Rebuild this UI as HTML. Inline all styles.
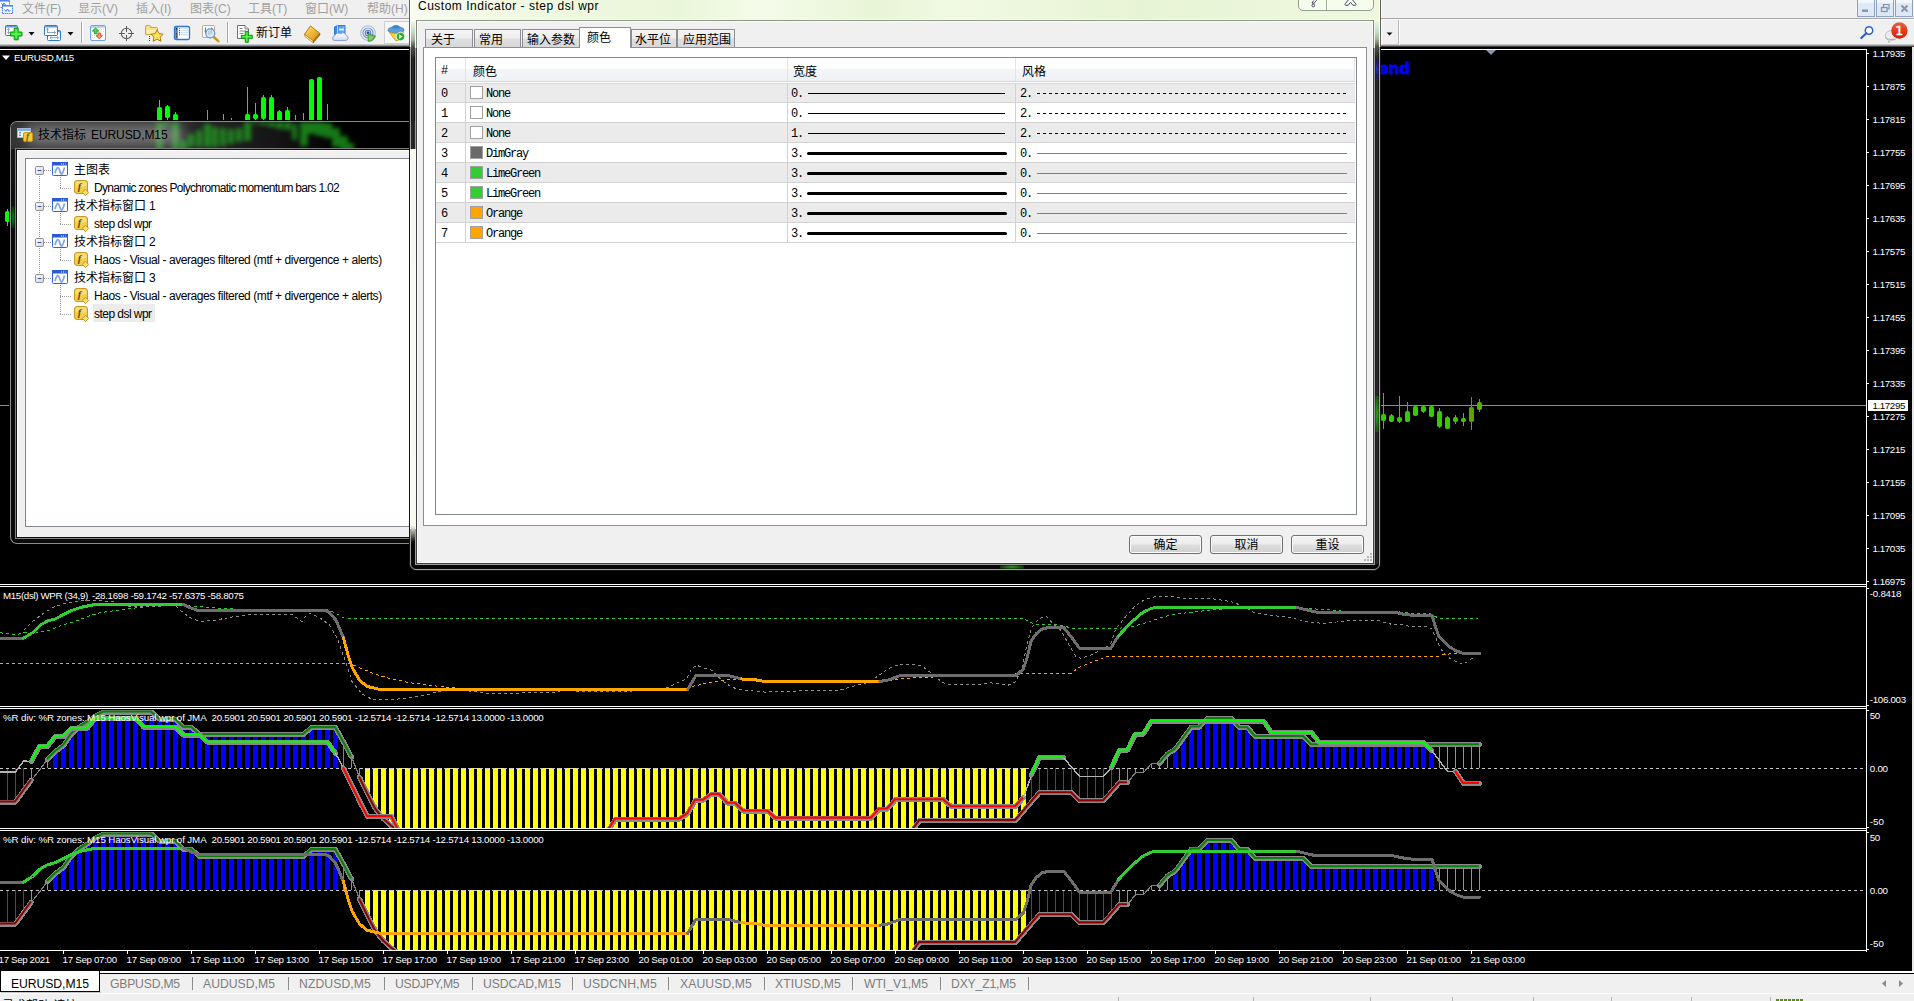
<!DOCTYPE html>
<html lang="zh"><head><meta charset="utf-8"><title>MetaTrader - EURUSD,M15</title>
<style>
*{box-sizing:border-box;margin:0;padding:0}
html,body{width:1914px;height:1001px;overflow:hidden;background:#f0f0f0}
body{position:relative;font-family:"Liberation Sans","Noto Sans CJK SC",sans-serif;font-size:12px;color:#000}
.a{position:absolute}
.t{position:absolute;white-space:nowrap;line-height:1}
.ct{position:absolute;white-space:nowrap;line-height:1;color:#fff;font-size:10.5px;letter-spacing:-0.2px}
.cj{font-family:"Liberation Sans","Noto Sans CJK SC",sans-serif}
svg{position:absolute;left:0;top:0;overflow:visible}
</style></head><body>

<div class="a" style="left:0px;top:0px;width:1914px;height:19px;background:#f0f0f0"></div>
<div class="a" style="left:0px;top:18px;width:1914px;height:1px;background:#a5a5a5"></div>
<div class="a" style="left:0px;top:19px;width:1914px;height:28px;background:#f0f0f0"></div>
<div class="a" style="left:0px;top:19px;width:1914px;height:1px;background:#fafafa"></div>
<div class="a" style="left:0px;top:44px;width:1914px;height:3px;background:linear-gradient(#e2e2e2,#8a8a8a 55%,#1a1a1a)"></div>
<svg width="16" height="18" viewBox="0 0 16 18"><rect x="-0.500" y="0.500" width="10" height="7" fill="#fff" stroke="#4a86e8" stroke-dasharray="1.500 .5"/><rect x="0" y="0" width="9.500" height="1.600" fill="#4a86e8"/><path d="M1.500 3.500l1.500 1.500 1-2 1.500 2" stroke="#3a6fd0" fill="none" stroke-width="1"/>
<rect x="2.500" y="5.500" width="10" height="8" fill="#fff" stroke="#4a86e8" stroke-dasharray="1.500 .5"/><rect x="2" y="5" width="11" height="1.600" fill="#4a86e8"/><path d="M4.500 9.500l1.500 2 1.500-2.500 1.500 2.500 1.500-1.500" stroke="#3a6fd0" fill="none" stroke-width="1"/></svg>
<div class="t" style="left:22px;top:2px;font-size:12px;color:#a0a0a0;line-height:15px">文件(F)</div>
<div class="t" style="left:78px;top:2px;font-size:12px;color:#a0a0a0;line-height:15px">显示(V)</div>
<div class="t" style="left:136px;top:2px;font-size:12px;color:#a0a0a0;line-height:15px">插入(I)</div>
<div class="t" style="left:190px;top:2px;font-size:12px;color:#a0a0a0;line-height:15px">图表(C)</div>
<div class="t" style="left:248px;top:2px;font-size:12px;color:#a0a0a0;line-height:15px">工具(T)</div>
<div class="t" style="left:305px;top:2px;font-size:12px;color:#a0a0a0;line-height:15px">窗口(W)</div>
<div class="t" style="left:367px;top:2px;font-size:12px;color:#a0a0a0;line-height:15px">帮助(H)</div>
<div class="a" style="left:1857px;top:-1px;width:18px;height:18px;background:linear-gradient(#f3f8fd,#eef5fc 18%,#dfeaf7 22%,#dce8f6);border:1px solid #8ea3c2"></div>
<div class="a" style="left:1876px;top:-1px;width:18px;height:18px;background:linear-gradient(#f3f8fd,#eef5fc 18%,#dfeaf7 22%,#dce8f6);border:1px solid #8ea3c2"></div>
<div class="a" style="left:1895px;top:-1px;width:18px;height:18px;background:linear-gradient(#f3f8fd,#eef5fc 18%,#dfeaf7 22%,#dce8f6);border:1px solid #8ea3c2"></div>
<svg width="1914" height="20" viewBox="0 0 1914 20">
<rect x="1862" y="9.500" width="6" height="2.400" fill="#8893a3"/>
<path d="M1883.500 7v-2.500h5.500v4.500h-1.800" fill="none" stroke="#8893a3" stroke-width="1.200"/><rect x="1881.500" y="7.500" width="5.500" height="4" fill="none" stroke="#8893a3" stroke-width="1.300"/>
<path d="M1901.500 5.500l6 6M1907.500 5.500l-6 6" stroke="#8893a3" stroke-width="1.900"/>
</svg>
<svg width="1914" height="48" viewBox="0 0 1914 48">
<!-- new chart -->
<rect x="5.500" y="25.500" width="12" height="10" rx="1" fill="#fdfdfd" stroke="#2f78c6" stroke-width="1"/><rect x="6" y="26" width="11" height="1.500" fill="#5e9fdc"/>
<path d="M8.500 28.500v5M7.300 29.800l1.200-1.300 1.200 1.300M7.300 32.200l1.200 1.300 1.200-1.300" stroke="#7b98b4" fill="none" stroke-width=".9"/>
<path d="M14.200 28.200h4v3.800h3.800v4h-3.800v3.800h-4v-3.800h-3.800v-4h3.800z" fill="#25e225" stroke="#0b990b" stroke-width="1" stroke-linejoin="round"/><path d="M15.200 29.200h2v8.600h-2z M11.400 33h9.600v2h-9.600z" fill="#7dfb7d" opacity=".55"/>
<path d="M28.500 32h6l-3 3.500z" fill="#111"/>
<!-- profiles -->
<rect x="47.500" y="30.500" width="13" height="10" rx="1" fill="#fdfdfd" stroke="#2f78c6"/><rect x="48" y="31" width="12" height="1.300" fill="#5e9fdc"/>
<path d="M50 37.700h8.500M50 37.700l1.500-1.400M50 37.700l1.500 1.400M58.500 37.700l-1.500-1.400M58.500 37.700l-1.500 1.400" stroke="#7b98b4" fill="none" stroke-width=".9"/>
<rect x="44.500" y="25.500" width="13" height="10" rx="1" fill="#fdfdfd" stroke="#2f78c6"/><rect x="45" y="26" width="12" height="1.500" fill="#5e9fdc"/>
<path d="M47.500 28.300v4.500M46.400 29.500l1.100-1.200 1.100 1.200M47 32.500h8.500M55.500 32.500l-1.500-1.400M55.500 32.500l-1.500 1.400" stroke="#7b98b4" fill="none" stroke-width=".9"/>
<path d="M67.500 32h6l-3 3.500z" fill="#111"/>
<rect x="81" y="22" width="1" height="21" fill="#a8a8a8"/><rect x="82" y="22" width="1" height="21" fill="#fff"/>
<!-- market watch -->
<rect x="90.500" y="25.500" width="15" height="15" rx="1.500" fill="#fff" stroke="#6aa5e6"/><rect x="91" y="26" width="14" height="2" fill="#b2d2f6"/>
<path d="M99 29.500h5M99 31.500h5M92 35.500h4M92 37.500h4" stroke="#d8d8d8" stroke-width=".8" stroke-dasharray="1 1"/>
<path d="M94.300 33.800v-2.700h-1.900l3.200-3.100 3.200 3.100h-1.900v2.700z" fill="#57d457" stroke="#1c981c" stroke-width=".9" stroke-linejoin="round"/>
<path d="M98 33v2.700h-1.900l3.200 3.100 3.200-3.100h-1.900v-2.700z" fill="#ff9c74" stroke="#d8431a" stroke-width=".9" stroke-linejoin="round"/>
<!-- crosshair -->
<circle cx="126.500" cy="33.500" r="5.200" fill="none" stroke="#5c5c5c" stroke-width="1.050"/><path d="M126.500 26v15M119 33.500h15" stroke="#5c5c5c" stroke-width="1.050"/>
<circle cx="126.500" cy="33.500" r="1.600" fill="#f0f0f0"/>
<!-- folder star -->
<path d="M145.500 26.800q0-1.300 1.300-1.300h2.700q1.300 0 1.300 1.300v.7h5.700q1 0 1 1v6h-12z" fill="#fbe08a" stroke="#c9a23a"/><path d="M146.500 30h10v4h-10z" fill="#fff6d0" opacity=".6"/>
<path d="M157 29.800l2 3.900 4.200.5-3.100 2.900.9 4.200-4-2.100-3.900 2.100.8-4.200-3-2.900 4.200-.5z" fill="#ffe259" stroke="#a97d12" stroke-width="1"/>
<path d="M149.500 36v5" stroke="#333" stroke-width="1" stroke-dasharray="1 1"/>
<!-- navigator -->
<rect x="174.500" y="26.500" width="15" height="13" rx="1.500" fill="#fff" stroke="#2f74c8" stroke-width="1.300"/><rect x="175.200" y="27.200" width="2.600" height="11.600" fill="#3d7fd2"/><rect x="176" y="33" width="1" height="5" fill="#555"/><circle cx="176.500" cy="28.700" r=".7" fill="#111"/>
<path d="M180.500 28.700h8M180.500 30.700h8M180.500 32.700h8M180.500 34.700h8" stroke="#c4d6f2" stroke-width=".9"/><path d="M179 28.700h1M179 34.700h1" stroke="#f01010" stroke-width="1.100"/><path d="M179 30.700h1M179 32.700h1" stroke="#1a3a1a" stroke-width="1.100"/>
<!-- magnifier chart -->
<rect x="202.500" y="25.500" width="12" height="12" rx=".8" fill="#fafafa" stroke="#b7ae98"/>
<path d="M205.500 27.500v6M211.500 27.500v5M204.500 31h1M211.500 28.500h1" stroke="#667" stroke-width=".9"/>
<circle cx="210.300" cy="33.300" r="4.500" fill="#d3e6f8" fill-opacity=".85" stroke="#5f97dc" stroke-width="1.200"/><path d="M209 31v4M211 30.500v4" stroke="#9ab" stroke-width="1.200" opacity=".7"/>
<path d="M214 37.300l4.300 3.800" stroke="#c7981f" stroke-width="2.600" stroke-linecap="round"/>
<rect x="227" y="22" width="1" height="21" fill="#a8a8a8"/><rect x="228" y="22" width="1" height="21" fill="#fff"/>
<!-- new order -->
<path d="M237.500 25.500h7.500l3.500 3.500v9.500h-11z" fill="#fff" stroke="#6e6e6e"/><path d="M245 25.500v3.500h3.500" fill="#e4e4e4" stroke="#6e6e6e" stroke-width=".8"/><path d="M239.500 28.500h3M239.500 31h6M239.500 33.500h4" stroke="#8a8a8a" stroke-width="1"/>
<path d="M245.300 31.300h3v4h4v3h-4v4h-3v-4h-4v-3h4z" fill="#25e225" stroke="#0b990b" stroke-width="1" stroke-linejoin="round"/><path d="M246.300 32.300h1v9h-1z M242.300 36.300h9v1h-9z" fill="#8dfc8d" opacity=".6"/>
<!-- gold book -->
<defs><linearGradient id="gb" x1="0" y1="0" x2="1" y2="1"><stop offset="0" stop-color="#ffe07a"/><stop offset=".5" stop-color="#f2b632"/><stop offset="1" stop-color="#c48a12"/></linearGradient>
<linearGradient id="cl" x1="0" y1="0" x2="0" y2="1"><stop offset="0" stop-color="#ffffff"/><stop offset="1" stop-color="#c9d9f2"/></linearGradient>
<linearGradient id="sv" x1="0" y1="0" x2="1" y2="0"><stop offset="0" stop-color="#2a86ee"/><stop offset="1" stop-color="#6fb4f8"/></linearGradient></defs>
<path d="M304.500 34.300l6-8.400 9.300 7.400-6.600 7.700z" fill="url(#gb)" stroke="#a87410" stroke-width=".9" stroke-linejoin="round"/>
<path d="M304.500 34.300l.4 2.200 8.500 6.300-.2-2z" fill="#fff1c4" stroke="#a87410" stroke-width=".7" stroke-linejoin="round"/><path d="M313.200 41l6.600-7.700.2 1.700-6.600 7.800z" fill="#b98414" stroke="#8a5e08" stroke-width=".6"/>
<!-- cloud computer -->
<path d="M334.500 27l3-1.500h7.500v9h-10.500z" fill="url(#sv)" stroke="#1f6fd0" stroke-width=".9"/><path d="M337.500 25.500v9" stroke="#cfe6ff" stroke-width=".8"/><rect x="339" y="28.500" width="5" height="2" fill="#dff0ff"/>
<path d="M334.300 40.500h11.500a2.600 2.600 0 0 0 .4-5.100 3.300 3.300 0 0 0-5.600-1.600 3.600 3.600 0 0 0-5.800 2 2.400 2.400 0 0 0-.5 4.700z" fill="url(#cl)" stroke="#8397c4" stroke-width=".9"/>
<!-- signals -->
<circle cx="368" cy="33" r="7.300" fill="none" stroke="#a9bde0" stroke-width="1.100"/><circle cx="368" cy="33" r="5" fill="none" stroke="#7f9ad2" stroke-width="1.200"/><circle cx="368" cy="33" r="2.800" fill="none" stroke="#5a7cc8" stroke-width="1.100"/><circle cx="368" cy="32.800" r="1.500" fill="#1f4fb0"/>
<path d="M368 33.500v8a8 8 0 0 0 7.600-5.600z" fill="#56b04a" stroke="#2c7f24" stroke-width=".5"/><path d="M368.600 35v5.600a6.500 6.500 0 0 0 5.200-3.800z" fill="#a8dca0" opacity=".55"/>
<!-- autotrading pressed -->
<rect x="384.500" y="21.500" width="28" height="22" fill="#f7f7f7" stroke="#cfcfcf"/>
<path d="M388 30a8 3.300 0 0 1 16 0a8 3.300 0 0 1-16 0z" fill="#5aa0dc" stroke="#2f74b8" stroke-width=".8"/><path d="M392 28.500a4 3.500 0 0 1 8 0z" fill="#3f86c8"/>
<path d="M389.500 32.500l6 8h5l3-8a12 4 0 0 1-14 0z" fill="#f4cf4a" stroke="#c39a1c" stroke-width=".8"/>
<circle cx="400.500" cy="36.500" r="4.300" fill="#27b427" stroke="#fff" stroke-width=".8"/><path d="M399 34.300l3.500 2.200-3.500 2.200z" fill="#fff"/>
<!-- right part -->
<path d="M1386.500 32.500h6l-3 3z" fill="#111"/>
<rect x="1398" y="20" width="1" height="25" fill="#b8b8b8"/><rect x="1399" y="20" width="1" height="25" fill="#fff"/>
<circle cx="1869" cy="30.500" r="3.700" fill="#fff" stroke="#2a60c8" stroke-width="1.500"/><path d="M1866.300 33.300l-5 4.700" stroke="#2a60c8" stroke-width="2.200" stroke-linecap="round"/>
<path d="M1885.300 35.500a6.300 4.800 0 1 1 9.500 4.100l-4.300.9-1.700 2.300-.2-2.500a6.300 4.800 0 0 1-3.300-4.800z" fill="#ececf0" stroke="#b9b9bd" stroke-width=".9"/><path d="M1886 37.500a6 3 0 0 0 9 1.500" fill="none" stroke="#9a9aa0" stroke-width=".8"/>
<defs><linearGradient id="bd" x1="0" y1="0" x2="0" y2="1"><stop offset="0" stop-color="#ea6040"/><stop offset=".55" stop-color="#e23a1e"/><stop offset="1" stop-color="#d61c04"/></linearGradient></defs>
<circle cx="1899.400" cy="30.500" r="8.200" fill="url(#bd)"/>
<text x="1899.200" y="35.200" style="font-family:'DejaVu Sans','Liberation Sans',sans-serif" font-size="12.500" fill="#fff" stroke="#fff" stroke-width=".45" text-anchor="middle">1</text>
</svg>
<div class="t" style="left:256px;top:25px;font-size:12px;line-height:16px;color:#000">新订单</div>
<div class="a" style="left:0px;top:47px;width:1912px;height:924px;background:#000"></div>
<div class="a" style="left:1912px;top:47px;width:2px;height:924px;background:#e8e8e8"></div>
<div class="a" style="left:0px;top:971px;width:1914px;height:30px;background:#f0f0f0"></div>
<div class="a" style="left:0px;top:971px;width:1914px;height:2px;background:#fff"></div>
<div class="a" style="left:99px;top:973px;width:1815px;height:1px;background:#000"></div>
<div class="a" style="left:0px;top:971px;width:100px;height:21px;background:#fff;border:1px solid #000;border-top:none"></div>
<div class="a" style="left:1px;top:992px;width:100px;height:1px;background:#c4c4c4"></div>
<div class="t" style="left:11px;top:977px;font-size:12.2px;letter-spacing:-0.064px;line-height:14px;color:#000">EURUSD,M15</div>
<div class="t" style="left:110px;top:977px;font-size:12.2px;letter-spacing:-0.207px;line-height:14px;color:#7d7d7d">GBPUSD,M5</div>
<div class="a" style="left:192px;top:977px;width:1px;height:13px;background:#8c8c8c"></div>
<div class="t" style="left:203px;top:977px;font-size:12.2px;letter-spacing:0.016px;line-height:14px;color:#7d7d7d">AUDUSD,M5</div>
<div class="a" style="left:288px;top:977px;width:1px;height:13px;background:#8c8c8c"></div>
<div class="t" style="left:299px;top:977px;font-size:12.2px;letter-spacing:0.092px;line-height:14px;color:#7d7d7d">NZDUSD,M5</div>
<div class="a" style="left:384px;top:977px;width:1px;height:13px;background:#8c8c8c"></div>
<div class="t" style="left:395px;top:977px;font-size:12.2px;letter-spacing:-0.275px;line-height:14px;color:#7d7d7d">USDJPY,M5</div>
<div class="a" style="left:472px;top:977px;width:1px;height:13px;background:#8c8c8c"></div>
<div class="t" style="left:483px;top:977px;font-size:12.2px;letter-spacing:-0.064px;line-height:14px;color:#7d7d7d">USDCAD,M15</div>
<div class="a" style="left:572px;top:977px;width:1px;height:13px;background:#8c8c8c"></div>
<div class="t" style="left:583px;top:977px;font-size:12.2px;letter-spacing:0.163px;line-height:14px;color:#7d7d7d">USDCNH,M5</div>
<div class="a" style="left:668px;top:977px;width:1px;height:13px;background:#8c8c8c"></div>
<div class="t" style="left:680px;top:977px;font-size:12.2px;letter-spacing:0.091px;line-height:14px;color:#7d7d7d">XAUUSD,M5</div>
<div class="a" style="left:764px;top:977px;width:1px;height:13px;background:#8c8c8c"></div>
<div class="t" style="left:775px;top:977px;font-size:12.2px;letter-spacing:0.103px;line-height:14px;color:#7d7d7d">XTIUSD,M5</div>
<div class="a" style="left:852px;top:977px;width:1px;height:13px;background:#8c8c8c"></div>
<div class="t" style="left:864px;top:977px;font-size:12.2px;letter-spacing:-0.045px;line-height:14px;color:#7d7d7d">WTI_V1,M5</div>
<div class="a" style="left:940px;top:977px;width:1px;height:13px;background:#8c8c8c"></div>
<div class="t" style="left:951px;top:977px;font-size:12.2px;letter-spacing:-0.161px;line-height:14px;color:#7d7d7d">DXY_Z1,M5</div>
<div class="a" style="left:1028px;top:977px;width:1px;height:13px;background:#8c8c8c"></div>
<svg width="1914" height="1001" viewBox="0 0 1914 1001"><path d="M1886 980v7l-4-3.500zM1899 980v7l4-3.500z" fill="#8a8a8a"/></svg>
<div class="a" style="left:0px;top:993px;width:1914px;height:1px;background:#fbfbfb"></div>
<div class="a" style="left:0px;top:994px;width:1914px;height:7px;background:#f0f0f0"></div>
<div class="a" style="left:1118px;top:997px;width:1px;height:4px;background:#b4b4b4"></div>
<div class="a" style="left:1253px;top:997px;width:1px;height:4px;background:#b4b4b4"></div>
<div class="a" style="left:1370px;top:997px;width:1px;height:4px;background:#b4b4b4"></div>
<div class="a" style="left:1452px;top:997px;width:1px;height:4px;background:#b4b4b4"></div>
<div class="a" style="left:1533px;top:997px;width:1px;height:4px;background:#b4b4b4"></div>
<div class="a" style="left:1611px;top:997px;width:1px;height:4px;background:#b4b4b4"></div>
<div class="a" style="left:1691px;top:997px;width:1px;height:4px;background:#b4b4b4"></div>
<div class="a" style="left:1770px;top:997px;width:1px;height:4px;background:#b4b4b4"></div>
<div class="a" style="left:1776px;top:999px;width:3px;height:2px;background:#5c8a14"></div>
<div class="a" style="left:1780px;top:999px;width:3px;height:2px;background:#5c8a14"></div>
<div class="a" style="left:1784px;top:999px;width:3px;height:2px;background:#5c8a14"></div>
<div class="a" style="left:1788px;top:999px;width:3px;height:2px;background:#5c8a14"></div>
<div class="a" style="left:1792px;top:999px;width:3px;height:2px;background:#5c8a14"></div>
<div class="a" style="left:1796px;top:999px;width:3px;height:2px;background:#5c8a14"></div>
<div class="a" style="left:1800px;top:999px;width:3px;height:2px;background:#5c8a14"></div>
<div class="t" style="left:2px;top:999px;font-size:12px;line-height:14px;color:#000">寻求帮助,请按 F1</div>
<div class="t" style="left:1141px;top:999px;font-size:12px;line-height:14px;color:#000">Default</div>
<div class="t" style="left:1846px;top:999px;font-size:12px;line-height:14px;color:#000">31/1 kb</div>
<svg width="1914" height="1001" viewBox="0 0 1914 1001" shape-rendering="crispEdges"><defs><clipPath id="c1"><rect x="0" y="587" width="1866" height="119"/></clipPath><clipPath id="c2"><rect x="0" y="709" width="1866" height="119"/></clipPath><clipPath id="c3"><rect x="0" y="831" width="1866" height="119"/></clipPath></defs><rect x="0" y="49" width="1867" height="1" fill="#fff"/><rect x="1866" y="49" width="1" height="903" fill="#fff"/><rect x="0" y="584" width="1867" height="1" fill="#fff"/><rect x="0" y="586" width="1867" height="1" fill="#fff"/><rect x="0" y="706" width="1867" height="1" fill="#fff"/><rect x="0" y="708" width="1867" height="1" fill="#fff"/><rect x="0" y="828" width="1867" height="1" fill="#fff"/><rect x="0" y="830" width="1867" height="1" fill="#fff"/><rect x="0" y="950" width="1867" height="1" fill="#fff"/><rect x="63" y="951" width="1" height="3" fill="#fff"/><rect x="127" y="951" width="1" height="3" fill="#fff"/><rect x="191" y="951" width="1" height="3" fill="#fff"/><rect x="255" y="951" width="1" height="3" fill="#fff"/><rect x="319" y="951" width="1" height="3" fill="#fff"/><rect x="383" y="951" width="1" height="3" fill="#fff"/><rect x="447" y="951" width="1" height="3" fill="#fff"/><rect x="511" y="951" width="1" height="3" fill="#fff"/><rect x="575" y="951" width="1" height="3" fill="#fff"/><rect x="639" y="951" width="1" height="3" fill="#fff"/><rect x="703" y="951" width="1" height="3" fill="#fff"/><rect x="767" y="951" width="1" height="3" fill="#fff"/><rect x="831" y="951" width="1" height="3" fill="#fff"/><rect x="895" y="951" width="1" height="3" fill="#fff"/><rect x="959" y="951" width="1" height="3" fill="#fff"/><rect x="1023" y="951" width="1" height="3" fill="#fff"/><rect x="1087" y="951" width="1" height="3" fill="#fff"/><rect x="1151" y="951" width="1" height="3" fill="#fff"/><rect x="1215" y="951" width="1" height="3" fill="#fff"/><rect x="1279" y="951" width="1" height="3" fill="#fff"/><rect x="1343" y="951" width="1" height="3" fill="#fff"/><rect x="1407" y="951" width="1" height="3" fill="#fff"/><rect x="1471" y="951" width="1" height="3" fill="#fff"/><rect x="1867" y="53" width="2" height="1" fill="#fff"/><rect x="1867" y="86" width="2" height="1" fill="#fff"/><rect x="1867" y="119" width="2" height="1" fill="#fff"/><rect x="1867" y="152" width="2" height="1" fill="#fff"/><rect x="1867" y="185" width="2" height="1" fill="#fff"/><rect x="1867" y="218" width="2" height="1" fill="#fff"/><rect x="1867" y="251" width="2" height="1" fill="#fff"/><rect x="1867" y="284" width="2" height="1" fill="#fff"/><rect x="1867" y="317" width="2" height="1" fill="#fff"/><rect x="1867" y="350" width="2" height="1" fill="#fff"/><rect x="1867" y="383" width="2" height="1" fill="#fff"/><rect x="1867" y="416" width="2" height="1" fill="#fff"/><rect x="1867" y="449" width="2" height="1" fill="#fff"/><rect x="1867" y="482" width="2" height="1" fill="#fff"/><rect x="1867" y="515" width="2" height="1" fill="#fff"/><rect x="1867" y="548" width="2" height="1" fill="#fff"/><rect x="1867" y="581" width="2" height="1" fill="#fff"/><rect x="1867" y="588" width="2" height="1" fill="#fff"/><rect x="1867" y="705" width="2" height="1" fill="#fff"/><rect x="1867" y="710" width="2" height="1" fill="#fff"/><rect x="1867" y="827" width="2" height="1" fill="#fff"/><rect x="1867" y="832" width="2" height="1" fill="#fff"/><rect x="1867" y="949" width="2" height="1" fill="#fff"/><rect x="0" y="405" width="1866" height="1" fill="#7f8ea3"/><rect x="159" y="100" width="1" height="26" fill="#00ff00"/><rect x="157" y="107" width="5" height="19" rx="1.8" fill="#00ff00" shape-rendering="geometricPrecision"/><rect x="167" y="105" width="1" height="21" fill="#00ff00"/><rect x="165" y="106" width="5" height="12" rx="1.8" fill="#00ff00" shape-rendering="geometricPrecision"/><rect x="175" y="112" width="1" height="14" fill="#00ff00"/><rect x="173" y="114" width="5" height="12" rx="1.8" fill="#00ff00" shape-rendering="geometricPrecision"/><rect x="207" y="110" width="1" height="16" fill="#00ff00"/><rect x="223" y="114" width="1" height="12" fill="#00ff00"/><rect x="231" y="118" width="1" height="8" fill="#00ff00"/><rect x="247" y="87" width="1" height="39" fill="#00ff00"/><rect x="245" y="114" width="5" height="12" rx="1.8" fill="#00ff00" shape-rendering="geometricPrecision"/><rect x="255" y="103" width="1" height="23" fill="#00ff00"/><rect x="253" y="114" width="5" height="5" rx="1.8" fill="#00ff00" shape-rendering="geometricPrecision"/><rect x="263" y="95" width="1" height="31" fill="#00ff00"/><rect x="261" y="97" width="5" height="22" rx="1.8" fill="#00ff00" shape-rendering="geometricPrecision"/><rect x="271" y="95" width="1" height="31" fill="#00ff00"/><rect x="269" y="97" width="5" height="29" rx="1.8" fill="#00ff00" shape-rendering="geometricPrecision"/><rect x="279" y="110" width="1" height="16" fill="#00ff00"/><rect x="277" y="111" width="5" height="15" rx="1.8" fill="#00ff00" shape-rendering="geometricPrecision"/><rect x="287" y="107" width="1" height="19" fill="#00ff00"/><rect x="285" y="110" width="5" height="16" rx="1.8" fill="#00ff00" shape-rendering="geometricPrecision"/><rect x="295" y="115" width="1" height="11" fill="#00ff00"/><rect x="303" y="113" width="1" height="13" fill="#00ff00"/><rect x="311" y="79" width="1" height="47" fill="#00ff00"/><rect x="309" y="79" width="5" height="47" rx="1.8" fill="#00ff00" shape-rendering="geometricPrecision"/><rect x="319" y="77" width="1" height="49" fill="#00ff00"/><rect x="317" y="77" width="5" height="49" rx="1.8" fill="#00ff00" shape-rendering="geometricPrecision"/><rect x="327" y="104" width="1" height="22" fill="#00ff00"/><rect x="7" y="209" width="1" height="17" fill="#00ff00"/><rect x="5" y="211" width="5" height="11" rx="1.8" fill="#00ff00" shape-rendering="geometricPrecision"/><rect x="1383" y="393" width="1" height="36" fill="#33cc00"/><rect x="1381" y="414" width="5" height="7" rx="1.8" fill="#33cc00" shape-rendering="geometricPrecision"/><rect x="1391" y="414" width="1" height="8" fill="#33cc00"/><rect x="1389" y="415" width="5" height="7" rx="1.8" fill="#33cc00" shape-rendering="geometricPrecision"/><rect x="1399" y="396" width="1" height="27" fill="#33cc00"/><rect x="1397" y="417" width="5" height="5" rx="1.8" fill="#33cc00" shape-rendering="geometricPrecision"/><rect x="1407" y="402" width="1" height="20" fill="#33cc00"/><rect x="1405" y="411" width="5" height="11" rx="1.8" fill="#33cc00" shape-rendering="geometricPrecision"/><rect x="1415" y="405" width="1" height="11" fill="#33cc00"/><rect x="1413" y="406" width="5" height="10" rx="1.8" fill="#33cc00" shape-rendering="geometricPrecision"/><rect x="1423" y="405" width="1" height="8" fill="#33cc00"/><rect x="1421" y="406" width="5" height="6" rx="1.8" fill="#33cc00" shape-rendering="geometricPrecision"/><rect x="1431" y="405" width="1" height="12" fill="#33cc00"/><rect x="1429" y="406" width="5" height="11" rx="1.8" fill="#33cc00" shape-rendering="geometricPrecision"/><rect x="1439" y="408" width="1" height="20" fill="#33cc00"/><rect x="1437" y="411" width="5" height="16" rx="1.8" fill="#33cc00" shape-rendering="geometricPrecision"/><rect x="1447" y="416" width="1" height="13" fill="#33cc00"/><rect x="1445" y="417" width="5" height="12" rx="1.8" fill="#33cc00" shape-rendering="geometricPrecision"/><rect x="1455" y="415" width="1" height="9" fill="#33cc00"/><rect x="1453" y="417" width="5" height="5" rx="1.8" fill="#33cc00" shape-rendering="geometricPrecision"/><rect x="1463" y="413" width="1" height="13" fill="#33cc00"/><rect x="1461" y="418" width="5" height="4" rx="1.8" fill="#33cc00" shape-rendering="geometricPrecision"/><rect x="1471" y="397" width="1" height="33" fill="#5aa500"/><rect x="1469" y="407" width="5" height="15" rx="1.8" fill="#5aa500" shape-rendering="geometricPrecision"/><rect x="1479" y="399" width="1" height="13" fill="#58b000"/><rect x="1477" y="402" width="5" height="8" rx="1.8" fill="#58b000" shape-rendering="geometricPrecision"/><g clip-path="url(#c1)"><polyline points="0,632.7 15,635 23.7,632.7 37.5,632.7 50,630 62.4,625 75,621.5 87.4,616.5 100,612.7 112.4,611 130,608.5 150,606.5 175,605.2 190,606 212,607.7 235,609 324,609.6 329.7,610.2 337,614 344.6,618.5 1023.4,618.5 1031,622.7 1038.4,624.5 1063.4,625.2 1070.9,628.5 1115.8,628.5 1130.8,627 1145.8,622.7 1160.8,617.7 1173.3,614.5 1193.3,612 1213.2,609.7 1230.7,608.5 1248.2,607.7 1297,607 1305.6,608.5 1325.6,609.5 1340.6,611 1393,611.3 1415,613.5 1431,614 1435.7,616.6 1438.9,618.2 1478,618.2" fill="none" stroke="#2ecc2e" stroke-width="1" stroke-dasharray="3 3"/><polyline points="0,663.4 349.6,663.4 359.6,667.7 374.6,674 389.6,678.4 409.6,682.7 429.6,685.2 449.5,687.7 478,689 688,689 692.8,686.4 702.8,684 717.8,681 732.7,679.4 742,679.2 764,681.4 880,681.4 890,680.2 907.6,678.2 927.5,677.4 950,675.7 1010,675.7 1017.2,673.4 1070.9,673.4 1078.4,667.7 1090.9,662.7 1105.8,657 1110.8,656.4 1440,656.4 1442.6,654.8 1446.4,654.2 1459,653.3" fill="none" stroke="#ffa500" stroke-width="1" stroke-dasharray="3 3"/><polyline points="23.7,630.2 32.5,621.5 42.5,614 52.4,607.7 62.4,604 75,601.5 87.4,600.2 112,601.5 130,606.5 150,607 175,605.2 180,610.2 190,617.7 200,621.5 215,620.2 235,616.5 257,614 292,614.5 297,618 302,621.5 306,616 309.7,613.5 319.7,617.7 329.7,625.2 337,637.7 344.6,659 352,681.4 362,693.9 372,699.4 389.6,700 409.6,697.6 429.6,694 444.6,690 478,691.4 485.5,693.4 553,692.6 560.4,690.9 628,691.4 667.8,687.6 677.8,682.6 686.5,679 691.5,669 696.5,665.2 702.8,667.7 711.5,670.2 722.8,681.4 732.8,687.6 742.7,690 765.2,692.1 790.2,691.4 815.2,690.1 840,690.1 852.6,686.4 867.6,682.6 877.6,676.4 887.6,669 900,664 912.6,664 922.5,666.4 932.5,674 942.5,682.6 950,684.4 981,684.4 988.5,682.6 1008.4,685.1 1016,681.4 1022.2,666.4 1027.2,644 1031,629 1038.4,619 1045.9,616 1053.4,624 1060.9,630.2 1068.4,644 1075.9,656.4 1080.9,658.4 1090.9,655.2 1103.4,649 1110.8,644 1115.8,629 1125.8,616.5 1135.8,605.2 1145.8,599 1155.8,596.5 1170.8,596.5 1185.8,598.5 1210.7,598.5 1230.7,601.5 1240.7,605.2 1253.2,612 1268.2,615.2 1288.2,617 1305.6,621.5 1323.1,623.5 1345.6,621 1378,620.5 1390.5,624 1402,624 1407.5,626 1426.3,626.4 1432,629 1434.5,634.8 1437.6,641.7 1440,648 1443.9,653 1450,658.6 1456.4,661.7 1462.7,664.2 1467.7,661.7 1475.2,656" fill="none" stroke="#8c8c8c" stroke-width="1" stroke-dasharray="3 3"/><polyline points="0,638.2 23.5,638.2" fill="none" stroke="#6e6e6e" stroke-width="3" stroke-linejoin="round" stroke-linecap="round"/><polyline points="23.5,638.2 32.5,632.7 40,625.2 47.5,621 55,619 62.4,615.2 72.4,610.2 82.4,607 95,604.5 183.6,604.5" fill="none" stroke="#32cd32" stroke-width="3" stroke-linejoin="round" stroke-linecap="round"/><polyline points="183.6,604.5 190,607.7 197.3,610.2 324.7,610.2 329.7,612.7 336,620.2 343.4,637.7" fill="none" stroke="#6e6e6e" stroke-width="3" stroke-linejoin="round" stroke-linecap="round"/><polyline points="343.4,637.7 348.4,656.4 352.2,667.7 359.6,680.2 367,686.4 379.6,689.4 687.8,689.4" fill="none" stroke="#ffa500" stroke-width="3" stroke-linejoin="round" stroke-linecap="round"/><polyline points="687.8,689.4 690.3,685 695.8,675.7 729,675.7 741.5,679" fill="none" stroke="#6e6e6e" stroke-width="3" stroke-linejoin="round" stroke-linecap="round"/><polyline points="741.5,679 755,679.7 764,681.4 880,681.4" fill="none" stroke="#ffa500" stroke-width="3" stroke-linejoin="round" stroke-linecap="round"/><polyline points="880,681.4 887.6,680.2 900,675.7 1016,675.7 1023.4,669 1027.2,657.7 1031,641.4 1036,634 1042.2,629 1049.7,627.2 1063.4,627.2 1070.9,636.4 1079.6,648.4 1110.8,648.4 1118.3,636" fill="none" stroke="#6e6e6e" stroke-width="3" stroke-linejoin="round" stroke-linecap="round"/><polyline points="1118.3,636 1130.8,622.7 1143.3,612 1152,608.2 1155.8,607.5 1297,607.5" fill="none" stroke="#32cd32" stroke-width="3" stroke-linejoin="round" stroke-linecap="round"/><polyline points="1297,607.5 1315.6,612 1393,612 1403.8,614.3 1412,615.3 1432,615.3 1435,625.4 1438.9,636.7 1450,647.3 1456.4,651 1462.7,653.2 1480,653.2" fill="none" stroke="#6e6e6e" stroke-width="3" stroke-linejoin="round" stroke-linecap="round"/></g><g clip-path="url(#c2)"><rect x="7" y="768" width="1" height="34" fill="#ff0000"/><rect x="15" y="768" width="1" height="34" fill="#ff0000"/><rect x="23" y="768" width="1" height="23" fill="#ff0000"/><rect x="31" y="768" width="1" height="12" fill="#909090"/><rect x="47" y="759.5" width="1" height="8.5" fill="#909090"/><rect x="53" y="752" width="5" height="16" fill="#0000ff"/><rect x="61" y="746" width="5" height="22" fill="#0000ff"/><rect x="69" y="734" width="5" height="34" fill="#0000ff"/><rect x="77" y="727" width="5" height="41" fill="#0000ff"/><rect x="85" y="722" width="5" height="46" fill="#0000ff"/><rect x="93" y="716" width="5" height="52" fill="#0000ff"/><rect x="101" y="712" width="5" height="56" fill="#0000ff"/><rect x="109" y="712" width="5" height="56" fill="#0000ff"/><rect x="117" y="712" width="5" height="56" fill="#0000ff"/><rect x="125" y="712" width="5" height="56" fill="#0000ff"/><rect x="133" y="712" width="5" height="56" fill="#0000ff"/><rect x="141" y="712" width="5" height="56" fill="#0000ff"/><rect x="149" y="712" width="5" height="56" fill="#0000ff"/><rect x="157" y="719" width="5" height="49" fill="#0000ff"/><rect x="165" y="719" width="5" height="49" fill="#0000ff"/><rect x="173" y="719" width="5" height="49" fill="#0000ff"/><rect x="181" y="727" width="5" height="41" fill="#0000ff"/><rect x="189" y="727" width="5" height="41" fill="#0000ff"/><rect x="197" y="734" width="5" height="34" fill="#0000ff"/><rect x="205" y="734" width="5" height="34" fill="#0000ff"/><rect x="213" y="734" width="5" height="34" fill="#0000ff"/><rect x="221" y="734" width="5" height="34" fill="#0000ff"/><rect x="229" y="734" width="5" height="34" fill="#0000ff"/><rect x="237" y="734" width="5" height="34" fill="#0000ff"/><rect x="245" y="734" width="5" height="34" fill="#0000ff"/><rect x="253" y="734" width="5" height="34" fill="#0000ff"/><rect x="261" y="734" width="5" height="34" fill="#0000ff"/><rect x="269" y="734" width="5" height="34" fill="#0000ff"/><rect x="277" y="734" width="5" height="34" fill="#0000ff"/><rect x="285" y="734" width="5" height="34" fill="#0000ff"/><rect x="293" y="734" width="5" height="34" fill="#0000ff"/><rect x="301" y="734" width="5" height="34" fill="#0000ff"/><rect x="309" y="728" width="5" height="40" fill="#0000ff"/><rect x="317" y="728" width="5" height="40" fill="#0000ff"/><rect x="325" y="728" width="5" height="40" fill="#0000ff"/><rect x="333" y="728" width="5" height="40" fill="#0000ff"/><rect x="343" y="742" width="1" height="26" fill="#00e000"/><rect x="351" y="757" width="1" height="11" fill="#909090"/><rect x="359" y="768" width="1" height="9" fill="#909090"/><rect x="365" y="768" width="5" height="26" fill="#ffff00"/><rect x="373" y="768" width="5" height="41" fill="#ffff00"/><rect x="381" y="768" width="5" height="51" fill="#ffff00"/><rect x="389" y="768" width="5" height="58" fill="#ffff00"/><rect x="397" y="768" width="5" height="64" fill="#ffff00"/><rect x="405" y="768" width="5" height="64" fill="#ffff00"/><rect x="413" y="768" width="5" height="64" fill="#ffff00"/><rect x="421" y="768" width="5" height="64" fill="#ffff00"/><rect x="429" y="768" width="5" height="64" fill="#ffff00"/><rect x="437" y="768" width="5" height="64" fill="#ffff00"/><rect x="445" y="768" width="5" height="64" fill="#ffff00"/><rect x="453" y="768" width="5" height="64" fill="#ffff00"/><rect x="461" y="768" width="5" height="64" fill="#ffff00"/><rect x="469" y="768" width="5" height="64" fill="#ffff00"/><rect x="477" y="768" width="5" height="64" fill="#ffff00"/><rect x="485" y="768" width="5" height="64" fill="#ffff00"/><rect x="493" y="768" width="5" height="64" fill="#ffff00"/><rect x="501" y="768" width="5" height="64" fill="#ffff00"/><rect x="509" y="768" width="5" height="64" fill="#ffff00"/><rect x="517" y="768" width="5" height="64" fill="#ffff00"/><rect x="525" y="768" width="5" height="64" fill="#ffff00"/><rect x="533" y="768" width="5" height="64" fill="#ffff00"/><rect x="541" y="768" width="5" height="64" fill="#ffff00"/><rect x="549" y="768" width="5" height="64" fill="#ffff00"/><rect x="557" y="768" width="5" height="64" fill="#ffff00"/><rect x="565" y="768" width="5" height="64" fill="#ffff00"/><rect x="573" y="768" width="5" height="64" fill="#ffff00"/><rect x="581" y="768" width="5" height="64" fill="#ffff00"/><rect x="589" y="768" width="5" height="64" fill="#ffff00"/><rect x="597" y="768" width="5" height="64" fill="#ffff00"/><rect x="605" y="768" width="5" height="64" fill="#ffff00"/><rect x="613" y="768" width="5" height="64" fill="#ffff00"/><rect x="621" y="768" width="5" height="64" fill="#ffff00"/><rect x="629" y="768" width="5" height="64" fill="#ffff00"/><rect x="637" y="768" width="5" height="64" fill="#ffff00"/><rect x="645" y="768" width="5" height="64" fill="#ffff00"/><rect x="653" y="768" width="5" height="64" fill="#ffff00"/><rect x="661" y="768" width="5" height="64" fill="#ffff00"/><rect x="669" y="768" width="5" height="64" fill="#ffff00"/><rect x="677" y="768" width="5" height="64" fill="#ffff00"/><rect x="685" y="768" width="5" height="64" fill="#ffff00"/><rect x="693" y="768" width="5" height="64" fill="#ffff00"/><rect x="701" y="768" width="5" height="64" fill="#ffff00"/><rect x="709" y="768" width="5" height="64" fill="#ffff00"/><rect x="717" y="768" width="5" height="64" fill="#ffff00"/><rect x="725" y="768" width="5" height="64" fill="#ffff00"/><rect x="733" y="768" width="5" height="64" fill="#ffff00"/><rect x="741" y="768" width="5" height="64" fill="#ffff00"/><rect x="749" y="768" width="5" height="64" fill="#ffff00"/><rect x="757" y="768" width="5" height="64" fill="#ffff00"/><rect x="765" y="768" width="5" height="64" fill="#ffff00"/><rect x="773" y="768" width="5" height="64" fill="#ffff00"/><rect x="781" y="768" width="5" height="64" fill="#ffff00"/><rect x="789" y="768" width="5" height="64" fill="#ffff00"/><rect x="797" y="768" width="5" height="64" fill="#ffff00"/><rect x="805" y="768" width="5" height="64" fill="#ffff00"/><rect x="813" y="768" width="5" height="64" fill="#ffff00"/><rect x="821" y="768" width="5" height="64" fill="#ffff00"/><rect x="829" y="768" width="5" height="64" fill="#ffff00"/><rect x="837" y="768" width="5" height="64" fill="#ffff00"/><rect x="845" y="768" width="5" height="64" fill="#ffff00"/><rect x="853" y="768" width="5" height="64" fill="#ffff00"/><rect x="861" y="768" width="5" height="64" fill="#ffff00"/><rect x="869" y="768" width="5" height="64" fill="#ffff00"/><rect x="877" y="768" width="5" height="64" fill="#ffff00"/><rect x="885" y="768" width="5" height="64" fill="#ffff00"/><rect x="893" y="768" width="5" height="64" fill="#ffff00"/><rect x="901" y="768" width="5" height="64" fill="#ffff00"/><rect x="909" y="768" width="5" height="64" fill="#ffff00"/><rect x="917" y="768" width="5" height="53" fill="#ffff00"/><rect x="925" y="768" width="5" height="53" fill="#ffff00"/><rect x="933" y="768" width="5" height="53" fill="#ffff00"/><rect x="941" y="768" width="5" height="53" fill="#ffff00"/><rect x="949" y="768" width="5" height="53" fill="#ffff00"/><rect x="957" y="768" width="5" height="53" fill="#ffff00"/><rect x="965" y="768" width="5" height="53" fill="#ffff00"/><rect x="973" y="768" width="5" height="53" fill="#ffff00"/><rect x="981" y="768" width="5" height="53" fill="#ffff00"/><rect x="989" y="768" width="5" height="53" fill="#ffff00"/><rect x="997" y="768" width="5" height="53" fill="#ffff00"/><rect x="1005" y="768" width="5" height="53" fill="#ffff00"/><rect x="1013" y="768" width="5" height="53" fill="#ffff00"/><rect x="1021" y="768" width="5" height="43" fill="#ffff00"/><rect x="1031" y="768" width="1" height="34" fill="#ff0000"/><rect x="1039" y="768" width="1" height="24.7" fill="#ff0000"/><rect x="1047" y="768" width="1" height="24.7" fill="#ff0000"/><rect x="1055" y="768" width="1" height="24.7" fill="#ff0000"/><rect x="1063" y="768" width="1" height="24.7" fill="#ff0000"/><rect x="1071" y="768" width="1" height="24.7" fill="#ff0000"/><rect x="1079" y="768" width="1" height="32.9" fill="#ff0000"/><rect x="1087" y="768" width="1" height="32.9" fill="#ff0000"/><rect x="1095" y="768" width="1" height="32.9" fill="#ff0000"/><rect x="1103" y="768" width="1" height="32.9" fill="#ff0000"/><rect x="1111" y="768" width="1" height="23.8" fill="#ff0000"/><rect x="1119" y="768" width="1" height="14.7" fill="#909090"/><rect x="1127" y="768" width="1" height="14.7" fill="#909090"/><rect x="1135" y="768" width="1" height="4.7" fill="#909090"/><rect x="1143" y="768" width="1" height="4.7" fill="#909090"/><rect x="1151" y="763.4" width="1" height="4.6" fill="#909090"/><rect x="1159" y="763.4" width="1" height="4.6" fill="#909090"/><rect x="1167" y="754" width="1" height="14" fill="#909090"/><rect x="1173" y="749" width="5" height="19" fill="#0000ff"/><rect x="1181" y="738" width="5" height="30" fill="#0000ff"/><rect x="1189" y="727" width="5" height="41" fill="#0000ff"/><rect x="1197" y="727" width="5" height="41" fill="#0000ff"/><rect x="1205" y="718" width="5" height="50" fill="#0000ff"/><rect x="1213" y="718" width="5" height="50" fill="#0000ff"/><rect x="1221" y="718" width="5" height="50" fill="#0000ff"/><rect x="1229" y="718" width="5" height="50" fill="#0000ff"/><rect x="1237" y="728" width="5" height="40" fill="#0000ff"/><rect x="1245" y="728" width="5" height="40" fill="#0000ff"/><rect x="1253" y="736" width="5" height="32" fill="#0000ff"/><rect x="1261" y="736" width="5" height="32" fill="#0000ff"/><rect x="1269" y="736" width="5" height="32" fill="#0000ff"/><rect x="1277" y="736" width="5" height="32" fill="#0000ff"/><rect x="1285" y="736" width="5" height="32" fill="#0000ff"/><rect x="1293" y="736" width="5" height="32" fill="#0000ff"/><rect x="1301" y="736" width="5" height="32" fill="#0000ff"/><rect x="1309" y="745" width="5" height="23" fill="#0000ff"/><rect x="1317" y="745" width="5" height="23" fill="#0000ff"/><rect x="1325" y="745" width="5" height="23" fill="#0000ff"/><rect x="1333" y="745" width="5" height="23" fill="#0000ff"/><rect x="1341" y="745" width="5" height="23" fill="#0000ff"/><rect x="1349" y="745" width="5" height="23" fill="#0000ff"/><rect x="1357" y="745" width="5" height="23" fill="#0000ff"/><rect x="1365" y="745" width="5" height="23" fill="#0000ff"/><rect x="1373" y="745" width="5" height="23" fill="#0000ff"/><rect x="1381" y="745" width="5" height="23" fill="#0000ff"/><rect x="1389" y="745" width="5" height="23" fill="#0000ff"/><rect x="1397" y="745" width="5" height="23" fill="#0000ff"/><rect x="1405" y="745" width="5" height="23" fill="#0000ff"/><rect x="1413" y="745" width="5" height="23" fill="#0000ff"/><rect x="1421" y="745" width="5" height="23" fill="#0000ff"/><rect x="1429" y="745" width="5" height="23" fill="#0000ff"/><rect x="1439" y="744.7" width="1" height="23.3" fill="#00ff00"/><rect x="1447" y="744.7" width="1" height="23.3" fill="#00ff00"/><rect x="1455" y="744.7" width="1" height="23.3" fill="#00ff00"/><rect x="1463" y="744.7" width="1" height="23.3" fill="#00ff00"/><rect x="1471" y="744.7" width="1" height="23.3" fill="#00ff00"/><rect x="1479" y="744.7" width="1" height="23.3" fill="#00ff00"/><line x1="0" y1="768.5" x2="1866" y2="768.5" stroke="#c8c8c8" stroke-width="1" stroke-dasharray="3 3"/><polyline points="-0.5,802 15.5,802 31.5,780" fill="none" stroke="#8a8a8a" stroke-width="5" stroke-linejoin="round" stroke-linecap="round"/><polyline points="31.5,780 39.5,770 47.5,759.5" fill="none" stroke="#808080" stroke-width="1.2" /><polyline points="47.5,759.5 55.5,751.5 63.5,745.5 71.5,734 79.5,727 87.5,722 95.5,716 103.5,712 151.5,712 159.5,719 175.5,719 183.5,727.3 191.5,727.3 199.5,734.5 303.5,734.5 311.5,727.6 335.5,727.6 343.5,742 351.5,757" fill="none" stroke="#8a8a8a" stroke-width="5" stroke-linejoin="round" stroke-linecap="round"/><polyline points="351.5,757 359.5,777" fill="none" stroke="#808080" stroke-width="1.2" /><polyline points="359.5,777 367.5,793.5 375.5,809 383.5,819 391.5,826 399.5,832 911.5,832 919.5,820.6 1015.5,820.6 1023.5,811.3 1031.5,802 1039.5,792.7 1071.5,792.7 1079.5,800.9 1103.5,800.9 1111.5,791.8 1119.5,782.7 1127.5,782.7" fill="none" stroke="#8a8a8a" stroke-width="5" stroke-linejoin="round" stroke-linecap="round"/><polyline points="1127.5,782.7 1135.5,772.7 1143.5,772.7 1151.5,763.4 1159.5,763.4" fill="none" stroke="#808080" stroke-width="1.2" /><polyline points="1159.5,763.4 1167.5,754 1175.5,749 1183.5,738 1191.5,727 1199.5,727 1207.5,718.5 1231.5,718.5 1239.5,727.7 1247.5,727.7 1255.5,736.5 1303.5,736.5 1311.5,744.7 1479.5,744.7" fill="none" stroke="#8a8a8a" stroke-width="5" stroke-linejoin="round" stroke-linecap="round"/><polyline points="-0.5,802 15.5,802 31.5,780" fill="none" stroke="#8b0000" stroke-width="2.1" stroke-linejoin="round" shape-rendering="geometricPrecision" transform="translate(-0.5,-0.5)"/><polyline points="47.5,759.5 55.5,751.5 63.5,745.5 71.5,734 79.5,727 87.5,722 95.5,716 103.5,712 151.5,712 159.5,719 175.5,719 183.5,727.3 191.5,727.3 199.5,734.5 303.5,734.5 311.5,727.6 335.5,727.6 343.5,742 351.5,757" fill="none" stroke="#0a7d0a" stroke-width="2.1" stroke-linejoin="round" shape-rendering="geometricPrecision" transform="translate(-0.5,-0.5)"/><polyline points="359.5,777 367.5,793.5 375.5,809 383.5,819 391.5,826 399.5,832 911.5,832 919.5,820.6 1015.5,820.6 1023.5,811.3 1031.5,802 1039.5,792.7 1071.5,792.7 1079.5,800.9 1103.5,800.9 1111.5,791.8 1119.5,782.7 1127.5,782.7" fill="none" stroke="#8b0000" stroke-width="2.1" stroke-linejoin="round" shape-rendering="geometricPrecision" transform="translate(-0.5,-0.5)"/><polyline points="1159.5,763.4 1167.5,754 1175.5,749 1183.5,738 1191.5,727 1199.5,727 1207.5,718.5 1231.5,718.5 1239.5,727.7 1247.5,727.7 1255.5,736.5 1303.5,736.5 1311.5,744.7 1479.5,744.7" fill="none" stroke="#0a7d0a" stroke-width="2.1" stroke-linejoin="round" shape-rendering="geometricPrecision" transform="translate(-0.5,-0.5)"/><polyline points="-0.5,772 15.5,772 23.5,761 31.5,761.5" fill="none" stroke="#b4b4b4" stroke-width="1.4" /><polyline points="31.5,761.5 39.5,746.4 47.5,746.4 55.5,736.3 63.5,736.3 71.5,728.2 87.5,728.2 95.5,718.2 135.5,718.2 143.5,727 175.5,727 183.5,735 199.5,735 207.5,742 327.5,742 335.5,753.3" fill="none" stroke="#8a8a8a" stroke-width="5" stroke-linejoin="round" stroke-linecap="round"/><polyline points="335.5,753.3 343.5,768" fill="none" stroke="#b4b4b4" stroke-width="1.4" /><polyline points="343.5,768 351.5,784.5 359.5,801 367.5,816.6 391.5,816.6 399.5,832 607.5,832 615.5,819 679.5,819 687.5,814 695.5,800.2 703.5,800.2 711.5,794.4 719.5,794.4 727.5,803.2 735.5,803.2 743.5,811 767.5,811 775.5,818.1 871.5,818.1 879.5,809 887.5,809 895.5,799.7 943.5,799.7 951.5,806.7 1015.5,806.7 1023.5,797.7" fill="none" stroke="#8a8a8a" stroke-width="5" stroke-linejoin="round" stroke-linecap="round"/><polyline points="1023.5,797.7 1031.5,775" fill="none" stroke="#b4b4b4" stroke-width="1.4" /><polyline points="1031.5,775 1039.5,757.7 1063.5,757.7" fill="none" stroke="#8a8a8a" stroke-width="5" stroke-linejoin="round" stroke-linecap="round"/><polyline points="1063.5,757.7 1071.5,767 1079.5,776.4 1103.5,776.4 1111.5,767.7" fill="none" stroke="#b4b4b4" stroke-width="1.4" /><polyline points="1111.5,767.7 1119.5,750.2 1127.5,750.2 1135.5,734 1143.5,734 1151.5,721 1263.5,721 1271.5,732.7 1311.5,732.7 1319.5,742.7 1423.5,742.7 1431.5,750.2" fill="none" stroke="#8a8a8a" stroke-width="5" stroke-linejoin="round" stroke-linecap="round"/><polyline points="1431.5,750.2 1439.5,761 1447.5,771.4 1455.5,771.4" fill="none" stroke="#b4b4b4" stroke-width="1.4" /><polyline points="1455.5,771.4 1463.5,783.4 1479.5,783.4" fill="none" stroke="#8a8a8a" stroke-width="5" stroke-linejoin="round" stroke-linecap="round"/><polyline points="31.5,761.5 39.5,746.4 47.5,746.4 55.5,736.3 63.5,736.3 71.5,728.2 87.5,728.2 95.5,718.2 135.5,718.2 143.5,727 175.5,727 183.5,735 199.5,735 207.5,742 327.5,742 335.5,753.3" fill="none" stroke="#00ff00" stroke-width="2.1" stroke-linejoin="round" shape-rendering="geometricPrecision" transform="translate(-0.5,-0.5)"/><polyline points="343.5,768 351.5,784.5 359.5,801 367.5,816.6 391.5,816.6 399.5,832 607.5,832 615.5,819 679.5,819 687.5,814 695.5,800.2 703.5,800.2 711.5,794.4 719.5,794.4 727.5,803.2 735.5,803.2 743.5,811 767.5,811 775.5,818.1 871.5,818.1 879.5,809 887.5,809 895.5,799.7 943.5,799.7 951.5,806.7 1015.5,806.7 1023.5,797.7" fill="none" stroke="#ff0000" stroke-width="2.1" stroke-linejoin="round" shape-rendering="geometricPrecision" transform="translate(-0.5,-0.5)"/><polyline points="1031.5,775 1039.5,757.7 1063.5,757.7" fill="none" stroke="#00ff00" stroke-width="2.1" stroke-linejoin="round" shape-rendering="geometricPrecision" transform="translate(-0.5,-0.5)"/><polyline points="1111.5,767.7 1119.5,750.2 1127.5,750.2 1135.5,734 1143.5,734 1151.5,721 1263.5,721 1271.5,732.7 1311.5,732.7 1319.5,742.7 1423.5,742.7 1431.5,750.2" fill="none" stroke="#00ff00" stroke-width="2.1" stroke-linejoin="round" shape-rendering="geometricPrecision" transform="translate(-0.5,-0.5)"/><polyline points="1455.5,771.4 1463.5,783.4 1479.5,783.4" fill="none" stroke="#ff0000" stroke-width="2.1" stroke-linejoin="round" shape-rendering="geometricPrecision" transform="translate(-0.5,-0.5)"/></g><g clip-path="url(#c3)"><rect x="7" y="890" width="1" height="34" fill="#ff0000"/><rect x="15" y="890" width="1" height="34" fill="#ff0000"/><rect x="23" y="890" width="1" height="23" fill="#ff0000"/><rect x="31" y="890" width="1" height="12" fill="#909090"/><rect x="47" y="881.5" width="1" height="8.5" fill="#909090"/><rect x="53" y="874" width="5" height="16" fill="#0000ff"/><rect x="61" y="868" width="5" height="22" fill="#0000ff"/><rect x="69" y="856" width="5" height="34" fill="#0000ff"/><rect x="77" y="849" width="5" height="41" fill="#0000ff"/><rect x="85" y="844" width="5" height="46" fill="#0000ff"/><rect x="93" y="838" width="5" height="52" fill="#0000ff"/><rect x="101" y="834" width="5" height="56" fill="#0000ff"/><rect x="109" y="834" width="5" height="56" fill="#0000ff"/><rect x="117" y="834" width="5" height="56" fill="#0000ff"/><rect x="125" y="834" width="5" height="56" fill="#0000ff"/><rect x="133" y="834" width="5" height="56" fill="#0000ff"/><rect x="141" y="834" width="5" height="56" fill="#0000ff"/><rect x="149" y="834" width="5" height="56" fill="#0000ff"/><rect x="157" y="841" width="5" height="49" fill="#0000ff"/><rect x="165" y="841" width="5" height="49" fill="#0000ff"/><rect x="173" y="841" width="5" height="49" fill="#0000ff"/><rect x="181" y="849" width="5" height="41" fill="#0000ff"/><rect x="189" y="849" width="5" height="41" fill="#0000ff"/><rect x="197" y="856" width="5" height="34" fill="#0000ff"/><rect x="205" y="856" width="5" height="34" fill="#0000ff"/><rect x="213" y="856" width="5" height="34" fill="#0000ff"/><rect x="221" y="856" width="5" height="34" fill="#0000ff"/><rect x="229" y="856" width="5" height="34" fill="#0000ff"/><rect x="237" y="856" width="5" height="34" fill="#0000ff"/><rect x="245" y="856" width="5" height="34" fill="#0000ff"/><rect x="253" y="856" width="5" height="34" fill="#0000ff"/><rect x="261" y="856" width="5" height="34" fill="#0000ff"/><rect x="269" y="856" width="5" height="34" fill="#0000ff"/><rect x="277" y="856" width="5" height="34" fill="#0000ff"/><rect x="285" y="856" width="5" height="34" fill="#0000ff"/><rect x="293" y="856" width="5" height="34" fill="#0000ff"/><rect x="301" y="856" width="5" height="34" fill="#0000ff"/><rect x="309" y="850" width="5" height="40" fill="#0000ff"/><rect x="317" y="850" width="5" height="40" fill="#0000ff"/><rect x="325" y="850" width="5" height="40" fill="#0000ff"/><rect x="333" y="850" width="5" height="40" fill="#0000ff"/><rect x="343" y="864" width="1" height="26" fill="#00e000"/><rect x="351" y="879" width="1" height="11" fill="#909090"/><rect x="359" y="890" width="1" height="9" fill="#909090"/><rect x="365" y="890" width="5" height="26" fill="#ffff00"/><rect x="373" y="890" width="5" height="41" fill="#ffff00"/><rect x="381" y="890" width="5" height="51" fill="#ffff00"/><rect x="389" y="890" width="5" height="58" fill="#ffff00"/><rect x="397" y="890" width="5" height="64" fill="#ffff00"/><rect x="405" y="890" width="5" height="64" fill="#ffff00"/><rect x="413" y="890" width="5" height="64" fill="#ffff00"/><rect x="421" y="890" width="5" height="64" fill="#ffff00"/><rect x="429" y="890" width="5" height="64" fill="#ffff00"/><rect x="437" y="890" width="5" height="64" fill="#ffff00"/><rect x="445" y="890" width="5" height="64" fill="#ffff00"/><rect x="453" y="890" width="5" height="64" fill="#ffff00"/><rect x="461" y="890" width="5" height="64" fill="#ffff00"/><rect x="469" y="890" width="5" height="64" fill="#ffff00"/><rect x="477" y="890" width="5" height="64" fill="#ffff00"/><rect x="485" y="890" width="5" height="64" fill="#ffff00"/><rect x="493" y="890" width="5" height="64" fill="#ffff00"/><rect x="501" y="890" width="5" height="64" fill="#ffff00"/><rect x="509" y="890" width="5" height="64" fill="#ffff00"/><rect x="517" y="890" width="5" height="64" fill="#ffff00"/><rect x="525" y="890" width="5" height="64" fill="#ffff00"/><rect x="533" y="890" width="5" height="64" fill="#ffff00"/><rect x="541" y="890" width="5" height="64" fill="#ffff00"/><rect x="549" y="890" width="5" height="64" fill="#ffff00"/><rect x="557" y="890" width="5" height="64" fill="#ffff00"/><rect x="565" y="890" width="5" height="64" fill="#ffff00"/><rect x="573" y="890" width="5" height="64" fill="#ffff00"/><rect x="581" y="890" width="5" height="64" fill="#ffff00"/><rect x="589" y="890" width="5" height="64" fill="#ffff00"/><rect x="597" y="890" width="5" height="64" fill="#ffff00"/><rect x="605" y="890" width="5" height="64" fill="#ffff00"/><rect x="613" y="890" width="5" height="64" fill="#ffff00"/><rect x="621" y="890" width="5" height="64" fill="#ffff00"/><rect x="629" y="890" width="5" height="64" fill="#ffff00"/><rect x="637" y="890" width="5" height="64" fill="#ffff00"/><rect x="645" y="890" width="5" height="64" fill="#ffff00"/><rect x="653" y="890" width="5" height="64" fill="#ffff00"/><rect x="661" y="890" width="5" height="64" fill="#ffff00"/><rect x="669" y="890" width="5" height="64" fill="#ffff00"/><rect x="677" y="890" width="5" height="64" fill="#ffff00"/><rect x="685" y="890" width="5" height="64" fill="#ffff00"/><rect x="693" y="890" width="5" height="64" fill="#ffff00"/><rect x="701" y="890" width="5" height="64" fill="#ffff00"/><rect x="709" y="890" width="5" height="64" fill="#ffff00"/><rect x="717" y="890" width="5" height="64" fill="#ffff00"/><rect x="725" y="890" width="5" height="64" fill="#ffff00"/><rect x="733" y="890" width="5" height="64" fill="#ffff00"/><rect x="741" y="890" width="5" height="64" fill="#ffff00"/><rect x="749" y="890" width="5" height="64" fill="#ffff00"/><rect x="757" y="890" width="5" height="64" fill="#ffff00"/><rect x="765" y="890" width="5" height="64" fill="#ffff00"/><rect x="773" y="890" width="5" height="64" fill="#ffff00"/><rect x="781" y="890" width="5" height="64" fill="#ffff00"/><rect x="789" y="890" width="5" height="64" fill="#ffff00"/><rect x="797" y="890" width="5" height="64" fill="#ffff00"/><rect x="805" y="890" width="5" height="64" fill="#ffff00"/><rect x="813" y="890" width="5" height="64" fill="#ffff00"/><rect x="821" y="890" width="5" height="64" fill="#ffff00"/><rect x="829" y="890" width="5" height="64" fill="#ffff00"/><rect x="837" y="890" width="5" height="64" fill="#ffff00"/><rect x="845" y="890" width="5" height="64" fill="#ffff00"/><rect x="853" y="890" width="5" height="64" fill="#ffff00"/><rect x="861" y="890" width="5" height="64" fill="#ffff00"/><rect x="869" y="890" width="5" height="64" fill="#ffff00"/><rect x="877" y="890" width="5" height="64" fill="#ffff00"/><rect x="885" y="890" width="5" height="64" fill="#ffff00"/><rect x="893" y="890" width="5" height="64" fill="#ffff00"/><rect x="901" y="890" width="5" height="64" fill="#ffff00"/><rect x="909" y="890" width="5" height="64" fill="#ffff00"/><rect x="917" y="890" width="5" height="53" fill="#ffff00"/><rect x="925" y="890" width="5" height="53" fill="#ffff00"/><rect x="933" y="890" width="5" height="53" fill="#ffff00"/><rect x="941" y="890" width="5" height="53" fill="#ffff00"/><rect x="949" y="890" width="5" height="53" fill="#ffff00"/><rect x="957" y="890" width="5" height="53" fill="#ffff00"/><rect x="965" y="890" width="5" height="53" fill="#ffff00"/><rect x="973" y="890" width="5" height="53" fill="#ffff00"/><rect x="981" y="890" width="5" height="53" fill="#ffff00"/><rect x="989" y="890" width="5" height="53" fill="#ffff00"/><rect x="997" y="890" width="5" height="53" fill="#ffff00"/><rect x="1005" y="890" width="5" height="53" fill="#ffff00"/><rect x="1013" y="890" width="5" height="53" fill="#ffff00"/><rect x="1021" y="890" width="5" height="43" fill="#ffff00"/><rect x="1031" y="890" width="1" height="34" fill="#ff0000"/><rect x="1039" y="890" width="1" height="24.7" fill="#ff0000"/><rect x="1047" y="890" width="1" height="24.7" fill="#ff0000"/><rect x="1055" y="890" width="1" height="24.7" fill="#ff0000"/><rect x="1063" y="890" width="1" height="24.7" fill="#ff0000"/><rect x="1071" y="890" width="1" height="24.7" fill="#ff0000"/><rect x="1079" y="890" width="1" height="32.9" fill="#ff0000"/><rect x="1087" y="890" width="1" height="32.9" fill="#ff0000"/><rect x="1095" y="890" width="1" height="32.9" fill="#ff0000"/><rect x="1103" y="890" width="1" height="32.9" fill="#ff0000"/><rect x="1111" y="890" width="1" height="23.8" fill="#ff0000"/><rect x="1119" y="890" width="1" height="14.7" fill="#909090"/><rect x="1127" y="890" width="1" height="14.7" fill="#909090"/><rect x="1135" y="890" width="1" height="4.7" fill="#909090"/><rect x="1143" y="890" width="1" height="4.7" fill="#909090"/><rect x="1151" y="885.4" width="1" height="4.6" fill="#909090"/><rect x="1159" y="885.4" width="1" height="4.6" fill="#909090"/><rect x="1167" y="876" width="1" height="14" fill="#909090"/><rect x="1173" y="871" width="5" height="19" fill="#0000ff"/><rect x="1181" y="860" width="5" height="30" fill="#0000ff"/><rect x="1189" y="849" width="5" height="41" fill="#0000ff"/><rect x="1197" y="849" width="5" height="41" fill="#0000ff"/><rect x="1205" y="840" width="5" height="50" fill="#0000ff"/><rect x="1213" y="840" width="5" height="50" fill="#0000ff"/><rect x="1221" y="840" width="5" height="50" fill="#0000ff"/><rect x="1229" y="840" width="5" height="50" fill="#0000ff"/><rect x="1237" y="850" width="5" height="40" fill="#0000ff"/><rect x="1245" y="850" width="5" height="40" fill="#0000ff"/><rect x="1253" y="858" width="5" height="32" fill="#0000ff"/><rect x="1261" y="858" width="5" height="32" fill="#0000ff"/><rect x="1269" y="858" width="5" height="32" fill="#0000ff"/><rect x="1277" y="858" width="5" height="32" fill="#0000ff"/><rect x="1285" y="858" width="5" height="32" fill="#0000ff"/><rect x="1293" y="858" width="5" height="32" fill="#0000ff"/><rect x="1301" y="858" width="5" height="32" fill="#0000ff"/><rect x="1309" y="867" width="5" height="23" fill="#0000ff"/><rect x="1317" y="867" width="5" height="23" fill="#0000ff"/><rect x="1325" y="867" width="5" height="23" fill="#0000ff"/><rect x="1333" y="867" width="5" height="23" fill="#0000ff"/><rect x="1341" y="867" width="5" height="23" fill="#0000ff"/><rect x="1349" y="867" width="5" height="23" fill="#0000ff"/><rect x="1357" y="867" width="5" height="23" fill="#0000ff"/><rect x="1365" y="867" width="5" height="23" fill="#0000ff"/><rect x="1373" y="867" width="5" height="23" fill="#0000ff"/><rect x="1381" y="867" width="5" height="23" fill="#0000ff"/><rect x="1389" y="867" width="5" height="23" fill="#0000ff"/><rect x="1397" y="867" width="5" height="23" fill="#0000ff"/><rect x="1405" y="867" width="5" height="23" fill="#0000ff"/><rect x="1413" y="867" width="5" height="23" fill="#0000ff"/><rect x="1421" y="867" width="5" height="23" fill="#0000ff"/><rect x="1429" y="867" width="5" height="23" fill="#0000ff"/><rect x="1439" y="866.7" width="1" height="23.3" fill="#00ff00"/><rect x="1447" y="866.7" width="1" height="23.3" fill="#00ff00"/><rect x="1455" y="866.7" width="1" height="23.3" fill="#00ff00"/><rect x="1463" y="866.7" width="1" height="23.3" fill="#00ff00"/><rect x="1471" y="866.7" width="1" height="23.3" fill="#00ff00"/><rect x="1479" y="866.7" width="1" height="23.3" fill="#00ff00"/><line x1="0" y1="890.5" x2="1866" y2="890.5" stroke="#c8c8c8" stroke-width="1" stroke-dasharray="3 3"/><polyline points="-0.5,924 15.5,924 31.5,902" fill="none" stroke="#8a8a8a" stroke-width="5" stroke-linejoin="round" stroke-linecap="round"/><polyline points="31.5,902 39.5,892 47.5,881.5" fill="none" stroke="#808080" stroke-width="1.2" /><polyline points="47.5,881.5 55.5,873.5 63.5,867.5 71.5,856 79.5,849 87.5,844 95.5,838 103.5,834 151.5,834 159.5,841 175.5,841 183.5,849.3 191.5,849.3 199.5,856.5 303.5,856.5 311.5,849.6 335.5,849.6 343.5,864 351.5,879" fill="none" stroke="#8a8a8a" stroke-width="5" stroke-linejoin="round" stroke-linecap="round"/><polyline points="351.5,879 359.5,899" fill="none" stroke="#808080" stroke-width="1.2" /><polyline points="359.5,899 367.5,915.5 375.5,931 383.5,941 391.5,948 399.5,954 911.5,954 919.5,942.6 1015.5,942.6 1023.5,933.3 1031.5,924 1039.5,914.7 1071.5,914.7 1079.5,922.9 1103.5,922.9 1111.5,913.8 1119.5,904.7 1127.5,904.7" fill="none" stroke="#8a8a8a" stroke-width="5" stroke-linejoin="round" stroke-linecap="round"/><polyline points="1127.5,904.7 1135.5,894.7 1143.5,894.7 1151.5,885.4 1159.5,885.4" fill="none" stroke="#808080" stroke-width="1.2" /><polyline points="1159.5,885.4 1167.5,876 1175.5,871 1183.5,860 1191.5,849 1199.5,849 1207.5,840.5 1231.5,840.5 1239.5,849.7 1247.5,849.7 1255.5,858.5 1303.5,858.5 1311.5,866.7 1479.5,866.7" fill="none" stroke="#8a8a8a" stroke-width="5" stroke-linejoin="round" stroke-linecap="round"/><polyline points="-0.5,924 15.5,924 31.5,902" fill="none" stroke="#8b0000" stroke-width="2.1" stroke-linejoin="round" shape-rendering="geometricPrecision" transform="translate(-0.5,-0.5)"/><polyline points="47.5,881.5 55.5,873.5 63.5,867.5 71.5,856 79.5,849 87.5,844 95.5,838 103.5,834 151.5,834 159.5,841 175.5,841 183.5,849.3 191.5,849.3 199.5,856.5 303.5,856.5 311.5,849.6 335.5,849.6 343.5,864 351.5,879" fill="none" stroke="#0a7d0a" stroke-width="2.1" stroke-linejoin="round" shape-rendering="geometricPrecision" transform="translate(-0.5,-0.5)"/><polyline points="359.5,899 367.5,915.5 375.5,931 383.5,941 391.5,948 399.5,954 911.5,954 919.5,942.6 1015.5,942.6 1023.5,933.3 1031.5,924 1039.5,914.7 1071.5,914.7 1079.5,922.9 1103.5,922.9 1111.5,913.8 1119.5,904.7 1127.5,904.7" fill="none" stroke="#8b0000" stroke-width="2.1" stroke-linejoin="round" shape-rendering="geometricPrecision" transform="translate(-0.5,-0.5)"/><polyline points="1159.5,885.4 1167.5,876 1175.5,871 1183.5,860 1191.5,849 1199.5,849 1207.5,840.5 1231.5,840.5 1239.5,849.7 1247.5,849.7 1255.5,858.5 1303.5,858.5 1311.5,866.7 1479.5,866.7" fill="none" stroke="#0a7d0a" stroke-width="2.1" stroke-linejoin="round" shape-rendering="geometricPrecision" transform="translate(-0.5,-0.5)"/></g><g clip-path="url(#c3)"><polyline points="0,882 23.5,882" fill="none" stroke="#6e6e6e" stroke-width="3" stroke-linejoin="round" stroke-linecap="round"/><polyline points="23.5,882 32.5,876.5 40,869 47.5,864.8 55,862.8 62.4,859 72.4,854 82.4,850.8 95,848.3 183.6,848.3" fill="none" stroke="#32cd32" stroke-width="3" stroke-linejoin="round" stroke-linecap="round"/><polyline points="183.6,848.3 190,851.5 197.3,854 324.7,854 329.7,856.5 336,864 343.4,881.5" fill="none" stroke="#6e6e6e" stroke-width="3" stroke-linejoin="round" stroke-linecap="round"/><polyline points="343.4,881.5 348.4,900.2 352.2,911.5 359.6,924 367,930.2 379.6,933.2 687.8,933.2" fill="none" stroke="#ffa500" stroke-width="3" stroke-linejoin="round" stroke-linecap="round"/><polyline points="687.8,933.2 690.3,928.8 695.8,919.5 729,919.5 741.5,922.8" fill="none" stroke="#6e6e6e" stroke-width="3" stroke-linejoin="round" stroke-linecap="round"/><polyline points="741.5,922.8 755,923.5 764,925.2 880,925.2" fill="none" stroke="#ffa500" stroke-width="3" stroke-linejoin="round" stroke-linecap="round"/><polyline points="880,925.2 887.6,924 900,919.5 1016,919.5 1023.4,912.8 1027.2,901.5 1031,885.2 1036,877.8 1042.2,872.8 1049.7,871 1063.4,871 1070.9,880.2 1079.6,892.2 1110.8,892.2 1118.3,879.8" fill="none" stroke="#6e6e6e" stroke-width="3" stroke-linejoin="round" stroke-linecap="round"/><polyline points="1118.3,879.8 1130.8,866.5 1143.3,855.8 1152,852 1155.8,851.3 1297,851.3" fill="none" stroke="#32cd32" stroke-width="3" stroke-linejoin="round" stroke-linecap="round"/><polyline points="1297,851.3 1315.6,855.8 1393,855.8 1403.8,858.1 1412,859.1 1432,859.1 1435,869.2 1438.9,880.5 1450,891.1 1456.4,894.8 1462.7,897 1480,897" fill="none" stroke="#6e6e6e" stroke-width="3" stroke-linejoin="round" stroke-linecap="round"/></g></svg>
<svg width="20" height="70" viewBox="0 0 20 70"><path d="M2 55.500h8l-4 4.500z" fill="#fff"/></svg>
<div class="t" style="left:14px;top:51.611000000000004px;font-size:9.78px;letter-spacing:-0.304px;color:#fff;line-height:12px;">EURUSD,M15</div>
<div class="t" style="left:3px;top:589.611px;font-size:9.78px;letter-spacing:-0.360px;color:#fff;line-height:12px;">M15(dsl) WPR (34,9)</div>
<div class="t" style="left:92px;top:589.611px;font-size:9.78px;letter-spacing:-0.303px;color:#fff;line-height:12px;">-28.1698 -59.1742 -57.6375 -58.8075</div>
<div class="t" style="left:3px;top:711.611px;font-size:9.78px;letter-spacing:-0.122px;color:#fff;line-height:12px;">%R div: %R zones: M15 HaosVisual wpr of JMA</div>
<div class="t" style="left:211.5px;top:711.611px;font-size:9.78px;letter-spacing:-0.273px;color:#fff;line-height:12px;">20.5901 20.5901 20.5901 20.5901 -12.5714 -12.5714 -12.5714 13.0000 -13.0000</div>
<div class="t" style="left:3px;top:833.611px;font-size:9.78px;letter-spacing:-0.122px;color:#fff;line-height:12px;">%R div: %R zones: M15 HaosVisual wpr of JMA</div>
<div class="t" style="left:211.5px;top:833.611px;font-size:9.78px;letter-spacing:-0.273px;color:#fff;line-height:12px;">20.5901 20.5901 20.5901 20.5901 -12.5714 -12.5714 -12.5714 13.0000 -13.0000</div>
<div class="t" style="left:1872.5px;top:47.611000000000004px;font-size:9.78px;letter-spacing:-0.408px;color:#fff;line-height:12px;">1.17935</div>
<div class="t" style="left:1872.5px;top:80.611px;font-size:9.78px;letter-spacing:-0.408px;color:#fff;line-height:12px;">1.17875</div>
<div class="t" style="left:1872.5px;top:113.611px;font-size:9.78px;letter-spacing:-0.408px;color:#fff;line-height:12px;">1.17815</div>
<div class="t" style="left:1872.5px;top:146.611px;font-size:9.78px;letter-spacing:-0.408px;color:#fff;line-height:12px;">1.17755</div>
<div class="t" style="left:1872.5px;top:179.611px;font-size:9.78px;letter-spacing:-0.408px;color:#fff;line-height:12px;">1.17695</div>
<div class="t" style="left:1872.5px;top:212.611px;font-size:9.78px;letter-spacing:-0.408px;color:#fff;line-height:12px;">1.17635</div>
<div class="t" style="left:1872.5px;top:245.611px;font-size:9.78px;letter-spacing:-0.408px;color:#fff;line-height:12px;">1.17575</div>
<div class="t" style="left:1872.5px;top:278.611px;font-size:9.78px;letter-spacing:-0.408px;color:#fff;line-height:12px;">1.17515</div>
<div class="t" style="left:1872.5px;top:311.611px;font-size:9.78px;letter-spacing:-0.408px;color:#fff;line-height:12px;">1.17455</div>
<div class="t" style="left:1872.5px;top:344.611px;font-size:9.78px;letter-spacing:-0.408px;color:#fff;line-height:12px;">1.17395</div>
<div class="t" style="left:1872.5px;top:377.611px;font-size:9.78px;letter-spacing:-0.408px;color:#fff;line-height:12px;">1.17335</div>
<div class="t" style="left:1872.5px;top:410.611px;font-size:9.78px;letter-spacing:-0.408px;color:#fff;line-height:12px;">1.17275</div>
<div class="t" style="left:1872.5px;top:443.611px;font-size:9.78px;letter-spacing:-0.408px;color:#fff;line-height:12px;">1.17215</div>
<div class="t" style="left:1872.5px;top:476.611px;font-size:9.78px;letter-spacing:-0.408px;color:#fff;line-height:12px;">1.17155</div>
<div class="t" style="left:1872.5px;top:509.611px;font-size:9.78px;letter-spacing:-0.408px;color:#fff;line-height:12px;">1.17095</div>
<div class="t" style="left:1872.5px;top:542.611px;font-size:9.78px;letter-spacing:-0.408px;color:#fff;line-height:12px;">1.17035</div>
<div class="t" style="left:1872.5px;top:575.611px;font-size:9.78px;letter-spacing:-0.408px;color:#fff;line-height:12px;">1.16975</div>
<div class="a" style="left:1868px;top:400px;width:40px;height:11px;background:#fff"></div>
<div class="t" style="left:1872.5px;top:399.611px;font-size:9.78px;letter-spacing:-0.408px;color:#000;line-height:12px;">1.17295</div>
<div class="t" style="left:1869.8px;top:587.611px;font-size:9.78px;letter-spacing:-0.253px;color:#fff;line-height:12px;">-0.8418</div>
<div class="t" style="left:1869.8px;top:693.611px;font-size:9.78px;letter-spacing:-0.326px;color:#fff;line-height:12px;">-106.003</div>
<div class="t" style="left:1869.8px;top:709.611px;font-size:9.78px;letter-spacing:-0.439px;color:#fff;line-height:12px;">50</div>
<div class="t" style="left:1869.8px;top:762.611px;font-size:9.78px;letter-spacing:-0.259px;color:#fff;line-height:12px;">0.00</div>
<div class="t" style="left:1869.8px;top:815.611px;font-size:9.78px;letter-spacing:-0.045px;color:#fff;line-height:12px;">-50</div>
<div class="t" style="left:1869.8px;top:831.611px;font-size:9.78px;letter-spacing:-0.439px;color:#fff;line-height:12px;">50</div>
<div class="t" style="left:1869.8px;top:884.611px;font-size:9.78px;letter-spacing:-0.259px;color:#fff;line-height:12px;">0.00</div>
<div class="t" style="left:1869.8px;top:937.611px;font-size:9.78px;letter-spacing:-0.045px;color:#fff;line-height:12px;">-50</div>
<div class="t" style="left:-1.4px;top:953.611px;font-size:9.78px;letter-spacing:-0.379px;color:#fff;line-height:12px;">17 Sep 2021</div>
<div class="t" style="left:62.6px;top:953.611px;font-size:9.78px;letter-spacing:-0.324px;color:#fff;line-height:12px;">17 Sep 07:00</div>
<div class="t" style="left:126.6px;top:953.611px;font-size:9.78px;letter-spacing:-0.324px;color:#fff;line-height:12px;">17 Sep 09:00</div>
<div class="t" style="left:190.6px;top:953.611px;font-size:9.78px;letter-spacing:-0.324px;color:#fff;line-height:12px;">17 Sep 11:00</div>
<div class="t" style="left:254.6px;top:953.611px;font-size:9.78px;letter-spacing:-0.324px;color:#fff;line-height:12px;">17 Sep 13:00</div>
<div class="t" style="left:318.6px;top:953.611px;font-size:9.78px;letter-spacing:-0.324px;color:#fff;line-height:12px;">17 Sep 15:00</div>
<div class="t" style="left:382.6px;top:953.611px;font-size:9.78px;letter-spacing:-0.324px;color:#fff;line-height:12px;">17 Sep 17:00</div>
<div class="t" style="left:446.6px;top:953.611px;font-size:9.78px;letter-spacing:-0.324px;color:#fff;line-height:12px;">17 Sep 19:00</div>
<div class="t" style="left:510.6px;top:953.611px;font-size:9.78px;letter-spacing:-0.324px;color:#fff;line-height:12px;">17 Sep 21:00</div>
<div class="t" style="left:574.6px;top:953.611px;font-size:9.78px;letter-spacing:-0.324px;color:#fff;line-height:12px;">17 Sep 23:00</div>
<div class="t" style="left:638.6px;top:953.611px;font-size:9.78px;letter-spacing:-0.324px;color:#fff;line-height:12px;">20 Sep 01:00</div>
<div class="t" style="left:702.6px;top:953.611px;font-size:9.78px;letter-spacing:-0.324px;color:#fff;line-height:12px;">20 Sep 03:00</div>
<div class="t" style="left:766.6px;top:953.611px;font-size:9.78px;letter-spacing:-0.324px;color:#fff;line-height:12px;">20 Sep 05:00</div>
<div class="t" style="left:830.6px;top:953.611px;font-size:9.78px;letter-spacing:-0.324px;color:#fff;line-height:12px;">20 Sep 07:00</div>
<div class="t" style="left:894.6px;top:953.611px;font-size:9.78px;letter-spacing:-0.324px;color:#fff;line-height:12px;">20 Sep 09:00</div>
<div class="t" style="left:958.6px;top:953.611px;font-size:9.78px;letter-spacing:-0.324px;color:#fff;line-height:12px;">20 Sep 11:00</div>
<div class="t" style="left:1022.6px;top:953.611px;font-size:9.78px;letter-spacing:-0.324px;color:#fff;line-height:12px;">20 Sep 13:00</div>
<div class="t" style="left:1086.6px;top:953.611px;font-size:9.78px;letter-spacing:-0.324px;color:#fff;line-height:12px;">20 Sep 15:00</div>
<div class="t" style="left:1150.6px;top:953.611px;font-size:9.78px;letter-spacing:-0.324px;color:#fff;line-height:12px;">20 Sep 17:00</div>
<div class="t" style="left:1214.6px;top:953.611px;font-size:9.78px;letter-spacing:-0.324px;color:#fff;line-height:12px;">20 Sep 19:00</div>
<div class="t" style="left:1278.6px;top:953.611px;font-size:9.78px;letter-spacing:-0.324px;color:#fff;line-height:12px;">20 Sep 21:00</div>
<div class="t" style="left:1342.6px;top:953.611px;font-size:9.78px;letter-spacing:-0.324px;color:#fff;line-height:12px;">20 Sep 23:00</div>
<div class="t" style="left:1406.6px;top:953.611px;font-size:9.78px;letter-spacing:-0.324px;color:#fff;line-height:12px;">21 Sep 01:00</div>
<div class="t" style="left:1470.6px;top:953.611px;font-size:9.78px;letter-spacing:-0.324px;color:#fff;line-height:12px;">21 Sep 03:00</div>
<div class="t" style="left:1379px;top:59px;font-weight:bold;font-size:17px;color:#0000ff;line-height:20px;letter-spacing:0.2px;-webkit-text-stroke:0.9px #0000ff">end</div>
<svg width="1914" height="60" viewBox="0 0 1914 60"><path d="M1486 50h10l-5 5z" fill="#8595ad"/></svg>
<div class="a" style="left:10px;top:121px;width:420px;height:423px;background:linear-gradient(#242424,#161616 30px,#0a0a0a 120px);border:1px solid #8a8a8a;border-radius:7px 0 0 7px;border-right:none;box-shadow:0 0 0 1px #000"></div>
<div class="a" style="left:11px;top:122px;width:419px;height:27px;background:linear-gradient(90deg,#343434,#2e2e2e 35%,#161616 62%,#000 80%);border-radius:6px 0 0 0;overflow:hidden"><div class="a" style="left:0;top:0;width:419px;height:27px;filter:blur(2.3px);opacity:.62"><div class="a" style="left:145px;top:0px;width:7px;height:28px;background:#22c022"></div><div class="a" style="left:153px;top:0px;width:5px;height:5px;background:#22c022"></div><div class="a" style="left:161px;top:0px;width:7px;height:28px;background:#22c022"></div><div class="a" style="left:169px;top:18px;width:7px;height:10px;background:#22c022"></div><div class="a" style="left:177px;top:12px;width:6px;height:13px;background:#22c022"></div><div class="a" style="left:185px;top:8px;width:6px;height:17px;background:#22c022"></div><div class="a" style="left:193px;top:2px;width:7px;height:23px;background:#22c022"></div><div class="a" style="left:201px;top:5px;width:6px;height:20px;background:#22c022"></div><div class="a" style="left:209px;top:6px;width:6px;height:18px;background:#22c022"></div><div class="a" style="left:217px;top:7px;width:6px;height:15px;background:#22c022"></div><div class="a" style="left:225px;top:6px;width:6px;height:14px;background:#22c022"></div><div class="a" style="left:233px;top:0px;width:7px;height:19px;background:#22c022"></div><div class="a" style="left:241px;top:0px;width:7px;height:2px;background:#22c022"></div><div class="a" style="left:249px;top:0px;width:7px;height:3px;background:#22c022"></div><div class="a" style="left:257px;top:0px;width:7px;height:5px;background:#22c022"></div><div class="a" style="left:265px;top:0px;width:7px;height:7px;background:#22c022"></div><div class="a" style="left:273px;top:0px;width:7px;height:8px;background:#22c022"></div><div class="a" style="left:281px;top:2px;width:5px;height:16px;background:#22c022"></div><div class="a" style="left:289px;top:0px;width:8px;height:24px;background:#22c022"></div><div class="a" style="left:297px;top:0px;width:8px;height:12px;background:#22c022"></div><div class="a" style="left:305px;top:0px;width:8px;height:14px;background:#22c022"></div><div class="a" style="left:313px;top:1px;width:8px;height:15px;background:#22c022"></div><div class="a" style="left:321px;top:6px;width:8px;height:19px;background:#22c022"></div><div class="a" style="left:329px;top:14px;width:8px;height:14px;background:#22c022"></div><div class="a" style="left:337px;top:21px;width:6px;height:7px;background:#22c022"></div></div><div class="a" style="left:14px;top:3px;width:160px;height:20px;border-radius:10px;background:#a8a8a8;filter:blur(7px);opacity:.62"></div></div>
<svg width="40" height="150" viewBox="0 0 40 150"><rect x="17.500" y="128.500" width="13" height="9" fill="#eef4fb" stroke="#9db7d6"/><rect x="18" y="129" width="12" height="2" fill="#7fb0ea"/>
<path d="M20 132v4M19 133l1-1 1 1M19 135l1 1 1-1" stroke="#5a86b8" fill="none" stroke-width=".8"/>
<rect x="23.500" y="132.500" width="9" height="9" rx="1.500" fill="#f7c93c" stroke="#c9961a"/><text x="26" y="140.300" font-family="Liberation Serif,serif" font-style="italic" font-weight="bold" font-size="9.500" fill="#7a5a08">f</text></svg>
<div class="t" style="left:38px;top:128px;font-size:12px;line-height:15px;color:#000">技术指标</div>
<div class="t" style="left:91px;top:128px;font-size:12px;letter-spacing:-0.085px;line-height:15px;color:#000">EURUSD,M15</div>
<div class="a" style="left:15px;top:148px;width:415px;height:391px;background:#f0f0f0;border:1px solid #808080;border-right:none"></div>
<div class="a" style="left:16px;top:149px;width:414px;height:389px;border:1px solid #111;border-right:none"></div>
<div class="a" style="left:17px;top:150px;width:413px;height:1px;background:#fdfdfd"></div>
<div class="a" style="left:17px;top:150px;width:1px;height:386px;background:#fdfdfd"></div>
<div class="a" style="left:25px;top:158px;width:400px;height:369px;background:#fff;border:1px solid #828790;border-right:none"></div>
<svg width="440" height="540" viewBox="0 0 440 540"><defs><linearGradient id="eb" x1="0" y1="0" x2="1" y2="1"><stop offset="0" stop-color="#ffffff"/><stop offset="1" stop-color="#d4d4d4"/></linearGradient></defs><path d="M44 170.5h8" stroke="#9a9a9a" stroke-width="1" stroke-dasharray="1 1"/><rect x="35.500" y="166.5" width="8" height="8" rx="1.200" fill="url(#eb)" stroke="#8e8e8e"/><path d="M37.500 170.5h4" stroke="#3a55a8" stroke-width="1"/><rect x="52.500" y="162.5" width="15" height="13" rx="1" fill="#fff" stroke="#2f62d8"/><rect x="52" y="162.0" width="16" height="3.500" fill="#2a5ad6"/><path d="M61 164.0h1M63 164.0h1" stroke="#fff" stroke-width="1"/><path d="M65 164.0h1" stroke="#ff9a8a" stroke-width="1"/><path d="M55 173.0c2-7 3.500-7 5-1.500s3 1 4.500-4" stroke="#7da2ee" fill="none" stroke-width="1.700"/><path d="M60 188.5h12" stroke="#9a9a9a" stroke-width="1" stroke-dasharray="1 1"/><rect x="74.500" y="180.5" width="13" height="13" rx="2.500" fill="#f6cc4a" stroke="#c79a20"/><rect x="75.500" y="181.5" width="11" height="5" rx="2" fill="#fbe28a" opacity=".8"/><text x="77.800" y="190.1" font-family="Liberation Serif,serif" font-style="italic" font-weight="bold" font-size="10.500" fill="#6b4a05">f</text><path d="M85.500 189.2l3.200 3.200-3.200 3.200-3.200-3.200z" fill="#fbe06c" stroke="#b98a14" stroke-width=".9"/><path d="M44 206.5h8" stroke="#9a9a9a" stroke-width="1" stroke-dasharray="1 1"/><rect x="35.500" y="202.5" width="8" height="8" rx="1.200" fill="url(#eb)" stroke="#8e8e8e"/><path d="M37.500 206.5h4" stroke="#3a55a8" stroke-width="1"/><rect x="52.500" y="198.5" width="15" height="13" rx="1" fill="#fff" stroke="#2f62d8"/><rect x="52" y="198.0" width="16" height="3.500" fill="#2a5ad6"/><path d="M61 200.0h1M63 200.0h1" stroke="#fff" stroke-width="1"/><path d="M65 200.0h1" stroke="#ff9a8a" stroke-width="1"/><path d="M55 209.0c2-7 3.500-7 5-1.500s3 1 4.500-4" stroke="#7da2ee" fill="none" stroke-width="1.700"/><path d="M60 224.5h12" stroke="#9a9a9a" stroke-width="1" stroke-dasharray="1 1"/><rect x="74.500" y="216.5" width="13" height="13" rx="2.500" fill="#f6cc4a" stroke="#c79a20"/><rect x="75.500" y="217.5" width="11" height="5" rx="2" fill="#fbe28a" opacity=".8"/><text x="77.800" y="226.1" font-family="Liberation Serif,serif" font-style="italic" font-weight="bold" font-size="10.500" fill="#6b4a05">f</text><path d="M85.500 225.2l3.200 3.200-3.200 3.200-3.200-3.200z" fill="#fbe06c" stroke="#b98a14" stroke-width=".9"/><path d="M44 242.5h8" stroke="#9a9a9a" stroke-width="1" stroke-dasharray="1 1"/><rect x="35.500" y="238.5" width="8" height="8" rx="1.200" fill="url(#eb)" stroke="#8e8e8e"/><path d="M37.500 242.5h4" stroke="#3a55a8" stroke-width="1"/><rect x="52.500" y="234.5" width="15" height="13" rx="1" fill="#fff" stroke="#2f62d8"/><rect x="52" y="234.0" width="16" height="3.500" fill="#2a5ad6"/><path d="M61 236.0h1M63 236.0h1" stroke="#fff" stroke-width="1"/><path d="M65 236.0h1" stroke="#ff9a8a" stroke-width="1"/><path d="M55 245.0c2-7 3.500-7 5-1.500s3 1 4.500-4" stroke="#7da2ee" fill="none" stroke-width="1.700"/><path d="M60 260.5h12" stroke="#9a9a9a" stroke-width="1" stroke-dasharray="1 1"/><rect x="74.500" y="252.5" width="13" height="13" rx="2.500" fill="#f6cc4a" stroke="#c79a20"/><rect x="75.500" y="253.5" width="11" height="5" rx="2" fill="#fbe28a" opacity=".8"/><text x="77.800" y="262.1" font-family="Liberation Serif,serif" font-style="italic" font-weight="bold" font-size="10.500" fill="#6b4a05">f</text><path d="M85.500 261.2l3.200 3.200-3.200 3.200-3.200-3.200z" fill="#fbe06c" stroke="#b98a14" stroke-width=".9"/><path d="M44 278.5h8" stroke="#9a9a9a" stroke-width="1" stroke-dasharray="1 1"/><rect x="35.500" y="274.5" width="8" height="8" rx="1.200" fill="url(#eb)" stroke="#8e8e8e"/><path d="M37.500 278.5h4" stroke="#3a55a8" stroke-width="1"/><rect x="52.500" y="270.5" width="15" height="13" rx="1" fill="#fff" stroke="#2f62d8"/><rect x="52" y="270.0" width="16" height="3.500" fill="#2a5ad6"/><path d="M61 272.0h1M63 272.0h1" stroke="#fff" stroke-width="1"/><path d="M65 272.0h1" stroke="#ff9a8a" stroke-width="1"/><path d="M55 281.0c2-7 3.500-7 5-1.500s3 1 4.500-4" stroke="#7da2ee" fill="none" stroke-width="1.700"/><path d="M60 296.5h12" stroke="#9a9a9a" stroke-width="1" stroke-dasharray="1 1"/><rect x="74.500" y="288.5" width="13" height="13" rx="2.500" fill="#f6cc4a" stroke="#c79a20"/><rect x="75.500" y="289.5" width="11" height="5" rx="2" fill="#fbe28a" opacity=".8"/><text x="77.800" y="298.1" font-family="Liberation Serif,serif" font-style="italic" font-weight="bold" font-size="10.500" fill="#6b4a05">f</text><path d="M85.500 297.2l3.200 3.200-3.200 3.200-3.200-3.200z" fill="#fbe06c" stroke="#b98a14" stroke-width=".9"/><path d="M60 314.5h12" stroke="#9a9a9a" stroke-width="1" stroke-dasharray="1 1"/><rect x="74.500" y="306.5" width="13" height="13" rx="2.500" fill="#f6cc4a" stroke="#c79a20"/><rect x="75.500" y="307.5" width="11" height="5" rx="2" fill="#fbe28a" opacity=".8"/><text x="77.800" y="316.1" font-family="Liberation Serif,serif" font-style="italic" font-weight="bold" font-size="10.500" fill="#6b4a05">f</text><path d="M85.500 315.2l3.200 3.200-3.200 3.200-3.200-3.200z" fill="#fbe06c" stroke="#b98a14" stroke-width=".9"/><path d="M39.500 176v26M39.500 212v26M39.500 248v26" stroke="#9a9a9a" stroke-width="1" stroke-dasharray="1 1"/><path d="M60.500 177v11" stroke="#9a9a9a" stroke-width="1" stroke-dasharray="1 1"/><path d="M60.500 213v11" stroke="#9a9a9a" stroke-width="1" stroke-dasharray="1 1"/><path d="M60.500 249v11" stroke="#9a9a9a" stroke-width="1" stroke-dasharray="1 1"/><path d="M60.500 285v29" stroke="#9a9a9a" stroke-width="1" stroke-dasharray="1 1"/></svg>
<div class="a" style="left:93px;top:304px;width:62px;height:18px;background:#ececec"></div>
<div class="t" style="left:74px;top:162.5px;font-size:12px;line-height:15px">主图表</div>
<div class="t" style="left:94px;top:180.5px;font-size:12px;letter-spacing:-0.705px;line-height:15px">Dynamic zones Polychromatic momentum bars 1.02</div>
<div class="t" style="left:74px;top:198.5px;font-size:12px;line-height:15px">技术指标窗口</div>
<div class="t" style="left:149px;top:198.5px;font-size:12px;line-height:15px">1</div>
<div class="t" style="left:94px;top:216.5px;font-size:12px;letter-spacing:-0.544px;line-height:15px">step dsl wpr</div>
<div class="t" style="left:74px;top:234.5px;font-size:12px;line-height:15px">技术指标窗口</div>
<div class="t" style="left:149px;top:234.5px;font-size:12px;line-height:15px">2</div>
<div class="t" style="left:94px;top:252.5px;font-size:12px;letter-spacing:-0.429px;line-height:15px">Haos - Visual - averages filtered (mtf + divergence + alerts)</div>
<div class="t" style="left:74px;top:270.5px;font-size:12px;line-height:15px">技术指标窗口</div>
<div class="t" style="left:149px;top:270.5px;font-size:12px;line-height:15px">3</div>
<div class="t" style="left:94px;top:288.5px;font-size:12px;letter-spacing:-0.429px;line-height:15px">Haos - Visual - averages filtered (mtf + divergence + alerts)</div>
<div class="t" style="left:94px;top:306.5px;font-size:12px;letter-spacing:-0.544px;line-height:15px">step dsl wpr</div>
<div class="a" style="left:11px;top:206px;width:4px;height:22px;background:radial-gradient(ellipse at center,#0c8a0c 0%,#073f07 55%,rgba(0,0,0,0) 100%)"></div>
<div class="a" style="left:409px;top:-8px;width:972px;height:579px;background:#080808;border:1px solid #151515;border-radius:7px"></div>
<div class="a" style="left:410px;top:-8px;width:970px;height:578px;border:1px solid #a0a0a0;border-radius:6px"></div>
<div class="a" style="left:411px;top:-8px;width:968px;height:55px;background:linear-gradient(90deg,#f8fcf0,#f0f9e2 12%,#eaf6d9 28%,#f5fbea 36%,#e8f5d6 48%,#f1f9e3 56%,#e7f4d4 75%,#eef8df)"></div>
<div class="a" style="left:409px;top:-8px;width:1px;height:55px;background:#5d6359"></div>
<div class="a" style="left:1380px;top:-8px;width:1px;height:55px;background:#5d6359"></div>
<div class="a" style="left:410px;top:-8px;width:1px;height:55px;background:#fdfffa"></div>
<div class="a" style="left:1379px;top:-8px;width:1px;height:55px;background:#fdfffa"></div>
<div class="a" style="left:1381px;top:0px;width:1px;height:18px;background:#fafafa"></div>
<div class="a" style="left:1381px;top:19px;width:1px;height:26px;background:#fafafa"></div>
<div class="a" style="left:411px;top:22px;width:4px;height:25px;background:linear-gradient(#eef6e3,#c4d9c6 40%,#a9b19c 70%,#4c5146)"></div>
<div class="a" style="left:1375px;top:22px;width:4px;height:25px;background:linear-gradient(#e8f3db,#c4dcc9 40%,#a9b19c 70%,#4c5146)"></div>
<div class="a" style="left:411px;top:47px;width:4px;height:74px;background:linear-gradient(90deg,#161616,#2a2a2a 50%,#0c0c0c)"></div>
<div class="a" style="left:1375px;top:47px;width:4px;height:517px;background:linear-gradient(90deg,#161616,#2c2c2c 50%,#0c0c0c)"></div>
<div class="a" style="left:411px;top:149px;width:4px;height:388px;background:linear-gradient(#f6f7ea,#f9f9ee)"></div>
<div class="a" style="left:410px;top:149px;width:1px;height:380px;background:#fff"></div>
<div class="a" style="left:411px;top:526px;width:4px;height:16px;background:linear-gradient(#f4f5e8,#0b0b0b)"></div>
<div class="a" style="left:411px;top:121px;width:4px;height:28px;background:#252525"></div>
<div class="a" style="left:415px;top:19px;width:960px;height:546px;border:1px solid #a0a0a0;border-top-color:#f4faec;"></div>
<div class="a" style="left:415px;top:19px;width:1px;height:29px;background:#f4faec"></div>
<div class="a" style="left:1374px;top:19px;width:1px;height:29px;background:#f4faec"></div>
<div class="a" style="left:415px;top:149px;width:1px;height:380px;background:#fbfbf3"></div>
<div class="a" style="left:416px;top:20px;width:958px;height:544px;background:#f0f0f0;border:1px solid #3c403a;border-top-color:#8d9983"></div>
<div class="a" style="left:416px;top:20px;width:1px;height:28px;background:#7e8878"></div>
<div class="a" style="left:1373px;top:20px;width:1px;height:28px;background:#7e8878"></div>
<div class="a" style="left:417px;top:21px;width:956px;height:1px;background:#fcfcfc"></div>
<div class="a" style="left:417px;top:562px;width:956px;height:1px;background:#fcfcfc"></div>
<div class="a" style="left:417px;top:21px;width:1px;height:542px;background:#fcfcfc"></div>
<div class="a" style="left:1372px;top:21px;width:1px;height:542px;background:#fcfcfc"></div>
<div class="t" style="left:418px;top:-1px;font-size:12px;letter-spacing:0.503px;line-height:14px;color:#000">Custom Indicator - step dsl wpr</div>
<div class="a" style="left:1298px;top:-10px;width:76px;height:21px;border:1px solid #939f8f;border-radius:0 0 5px 5px;background:linear-gradient(#f4fbe9,#f7fdee)"></div>
<div class="a" style="left:1326px;top:-10px;width:1px;height:20px;background:#a5b0a0"></div>
<svg width="1400" height="12" viewBox="0 0 1400 12"><g fill="#fff" stroke="#3d4757" stroke-width="1" stroke-linejoin="round"><path d="M1314.800 -1c0 1.600-2.600 2-2.600 4.200h2.200c0-1.600 2.600-2.200 2.600-4.200z"/><circle cx="1313.300" cy="5.500" r="1.350"/><path d="M1350.500 -2.500l-5.300 6.300a.9.900 0 0 0 .7 1.500h2.200l2.400-3 2.400 3h2.200a.9.900 0 0 0 .7-1.500z"/></g></svg>
<div class="a" style="left:425px;top:29px;width:48px;height:19px;background:linear-gradient(#f4f4f4,#ededed 45%,#dfdfdf 50%,#d6d6d6);border:1px solid #8c8e94;border-bottom:none"></div>
<div class="t" style="left:431px;top:33px;font-size:12px;line-height:15px">关于</div>
<div class="a" style="left:474px;top:29px;width:47px;height:19px;background:linear-gradient(#f4f4f4,#ededed 45%,#dfdfdf 50%,#d6d6d6);border:1px solid #8c8e94;border-bottom:none"></div>
<div class="t" style="left:479px;top:33px;font-size:12px;line-height:15px">常用</div>
<div class="a" style="left:522px;top:29px;width:58px;height:19px;background:linear-gradient(#f4f4f4,#ededed 45%,#dfdfdf 50%,#d6d6d6);border:1px solid #8c8e94;border-bottom:none"></div>
<div class="t" style="left:527px;top:33px;font-size:12px;line-height:15px">输入参数</div>
<div class="a" style="left:631px;top:29px;width:46px;height:19px;background:linear-gradient(#f4f4f4,#ededed 45%,#dfdfdf 50%,#d6d6d6);border:1px solid #8c8e94;border-bottom:none"></div>
<div class="t" style="left:635px;top:33px;font-size:12px;line-height:15px">水平位</div>
<div class="a" style="left:677px;top:29px;width:58px;height:19px;background:linear-gradient(#f4f4f4,#ededed 45%,#dfdfdf 50%,#d6d6d6);border:1px solid #8c8e94;border-bottom:none"></div>
<div class="t" style="left:683px;top:33px;font-size:12px;line-height:15px">应用范围</div>
<div class="a" style="left:423px;top:47px;width:944px;height:479px;background:#fff;border:1px solid #8c8e94"></div>
<div class="a" style="left:579px;top:27px;width:52px;height:21px;background:#fff;border:1px solid #8c8e94;border-bottom:none"></div>
<div class="t" style="left:587px;top:31px;font-size:12px;line-height:15px">颜色</div>
<div class="a" style="left:435px;top:57px;width:922px;height:458px;background:#fff;border:1px solid #828790"></div>
<div class="a" style="left:436px;top:58px;width:919px;height:24px;background:linear-gradient(#fff,#fff 45%,#f4f5f8 50%,#f0f1f5);border-bottom:1px solid #d5d5d5"></div>
<div class="a" style="left:465px;top:58px;width:1px;height:23px;background:#e2e4ea"></div>
<div class="a" style="left:787px;top:58px;width:1px;height:23px;background:#e2e4ea"></div>
<div class="a" style="left:1015px;top:58px;width:1px;height:23px;background:#e2e4ea"></div>
<div class="a" style="left:1354px;top:58px;width:1px;height:23px;background:#e2e4ea"></div>
<div class="t" style="left:441px;top:64px;font-size:12px;line-height:15px;font-family:Liberation Mono,monospace;letter-spacing:-1px">#</div>
<div class="t" style="left:473px;top:64.5px;font-size:12px;line-height:15px">颜色</div>
<div class="t" style="left:793px;top:64.5px;font-size:12px;line-height:15px">宽度</div>
<div class="t" style="left:1022px;top:64.5px;font-size:12px;line-height:15px">风格</div>
<div class="a" style="left:436px;top:83px;width:919px;height:19px;background:#ebebeb"></div>
<div class="a" style="left:436px;top:102px;width:919px;height:1px;background:#d2d2d2"></div>
<div class="t" style="left:441px;top:88px;font-family:Liberation Mono,monospace;font-size:12px;letter-spacing:-1.2px;line-height:13px">0</div>
<div class="a" style="left:470px;top:86px;width:13px;height:13px;background:#fff;border:1px solid #a0a0a0"></div>
<div class="t" style="left:486px;top:88px;font-family:Liberation Mono,monospace;font-size:12px;letter-spacing:-1.2px;line-height:13px">None</div>
<div class="t" style="left:791px;top:88px;font-family:Liberation Mono,monospace;font-size:12px;letter-spacing:-1.2px;line-height:13px">0.</div>
<div class="t" style="left:1020px;top:88px;font-family:Liberation Mono,monospace;font-size:12px;letter-spacing:-1.2px;line-height:13px">2.</div>
<div class="a" style="left:436px;top:103px;width:919px;height:19px;background:#fff"></div>
<div class="a" style="left:436px;top:122px;width:919px;height:1px;background:#d2d2d2"></div>
<div class="t" style="left:441px;top:108px;font-family:Liberation Mono,monospace;font-size:12px;letter-spacing:-1.2px;line-height:13px">1</div>
<div class="a" style="left:470px;top:106px;width:13px;height:13px;background:#fff;border:1px solid #a0a0a0"></div>
<div class="t" style="left:486px;top:108px;font-family:Liberation Mono,monospace;font-size:12px;letter-spacing:-1.2px;line-height:13px">None</div>
<div class="t" style="left:791px;top:108px;font-family:Liberation Mono,monospace;font-size:12px;letter-spacing:-1.2px;line-height:13px">0.</div>
<div class="t" style="left:1020px;top:108px;font-family:Liberation Mono,monospace;font-size:12px;letter-spacing:-1.2px;line-height:13px">2.</div>
<div class="a" style="left:436px;top:123px;width:919px;height:19px;background:#ebebeb"></div>
<div class="a" style="left:436px;top:142px;width:919px;height:1px;background:#d2d2d2"></div>
<div class="t" style="left:441px;top:128px;font-family:Liberation Mono,monospace;font-size:12px;letter-spacing:-1.2px;line-height:13px">2</div>
<div class="a" style="left:470px;top:126px;width:13px;height:13px;background:#fff;border:1px solid #a0a0a0"></div>
<div class="t" style="left:486px;top:128px;font-family:Liberation Mono,monospace;font-size:12px;letter-spacing:-1.2px;line-height:13px">None</div>
<div class="t" style="left:791px;top:128px;font-family:Liberation Mono,monospace;font-size:12px;letter-spacing:-1.2px;line-height:13px">1.</div>
<div class="t" style="left:1020px;top:128px;font-family:Liberation Mono,monospace;font-size:12px;letter-spacing:-1.2px;line-height:13px">2.</div>
<div class="a" style="left:436px;top:143px;width:919px;height:19px;background:#fff"></div>
<div class="a" style="left:436px;top:162px;width:919px;height:1px;background:#d2d2d2"></div>
<div class="t" style="left:441px;top:148px;font-family:Liberation Mono,monospace;font-size:12px;letter-spacing:-1.2px;line-height:13px">3</div>
<div class="a" style="left:470px;top:146px;width:13px;height:13px;background:#696969;border:1px solid #a0a0a0"></div>
<div class="t" style="left:486px;top:148px;font-family:Liberation Mono,monospace;font-size:12px;letter-spacing:-1.2px;line-height:13px">DimGray</div>
<div class="t" style="left:791px;top:148px;font-family:Liberation Mono,monospace;font-size:12px;letter-spacing:-1.2px;line-height:13px">3.</div>
<div class="t" style="left:1020px;top:148px;font-family:Liberation Mono,monospace;font-size:12px;letter-spacing:-1.2px;line-height:13px">0.</div>
<div class="a" style="left:436px;top:163px;width:919px;height:19px;background:#ebebeb"></div>
<div class="a" style="left:436px;top:182px;width:919px;height:1px;background:#d2d2d2"></div>
<div class="t" style="left:441px;top:168px;font-family:Liberation Mono,monospace;font-size:12px;letter-spacing:-1.2px;line-height:13px">4</div>
<div class="a" style="left:470px;top:166px;width:13px;height:13px;background:#32cd32;border:1px solid #a0a0a0"></div>
<div class="t" style="left:486px;top:168px;font-family:Liberation Mono,monospace;font-size:12px;letter-spacing:-1.2px;line-height:13px">LimeGreen</div>
<div class="t" style="left:791px;top:168px;font-family:Liberation Mono,monospace;font-size:12px;letter-spacing:-1.2px;line-height:13px">3.</div>
<div class="t" style="left:1020px;top:168px;font-family:Liberation Mono,monospace;font-size:12px;letter-spacing:-1.2px;line-height:13px">0.</div>
<div class="a" style="left:436px;top:183px;width:919px;height:19px;background:#fff"></div>
<div class="a" style="left:436px;top:202px;width:919px;height:1px;background:#d2d2d2"></div>
<div class="t" style="left:441px;top:188px;font-family:Liberation Mono,monospace;font-size:12px;letter-spacing:-1.2px;line-height:13px">5</div>
<div class="a" style="left:470px;top:186px;width:13px;height:13px;background:#32cd32;border:1px solid #a0a0a0"></div>
<div class="t" style="left:486px;top:188px;font-family:Liberation Mono,monospace;font-size:12px;letter-spacing:-1.2px;line-height:13px">LimeGreen</div>
<div class="t" style="left:791px;top:188px;font-family:Liberation Mono,monospace;font-size:12px;letter-spacing:-1.2px;line-height:13px">3.</div>
<div class="t" style="left:1020px;top:188px;font-family:Liberation Mono,monospace;font-size:12px;letter-spacing:-1.2px;line-height:13px">0.</div>
<div class="a" style="left:436px;top:203px;width:919px;height:19px;background:#ebebeb"></div>
<div class="a" style="left:436px;top:222px;width:919px;height:1px;background:#d2d2d2"></div>
<div class="t" style="left:441px;top:208px;font-family:Liberation Mono,monospace;font-size:12px;letter-spacing:-1.2px;line-height:13px">6</div>
<div class="a" style="left:470px;top:206px;width:13px;height:13px;background:#ffa500;border:1px solid #a0a0a0"></div>
<div class="t" style="left:486px;top:208px;font-family:Liberation Mono,monospace;font-size:12px;letter-spacing:-1.2px;line-height:13px">Orange</div>
<div class="t" style="left:791px;top:208px;font-family:Liberation Mono,monospace;font-size:12px;letter-spacing:-1.2px;line-height:13px">3.</div>
<div class="t" style="left:1020px;top:208px;font-family:Liberation Mono,monospace;font-size:12px;letter-spacing:-1.2px;line-height:13px">0.</div>
<div class="a" style="left:436px;top:223px;width:919px;height:19px;background:#fff"></div>
<div class="a" style="left:436px;top:242px;width:919px;height:1px;background:#d2d2d2"></div>
<div class="t" style="left:441px;top:228px;font-family:Liberation Mono,monospace;font-size:12px;letter-spacing:-1.2px;line-height:13px">7</div>
<div class="a" style="left:470px;top:226px;width:13px;height:13px;background:#ffa500;border:1px solid #a0a0a0"></div>
<div class="t" style="left:486px;top:228px;font-family:Liberation Mono,monospace;font-size:12px;letter-spacing:-1.2px;line-height:13px">Orange</div>
<div class="t" style="left:791px;top:228px;font-family:Liberation Mono,monospace;font-size:12px;letter-spacing:-1.2px;line-height:13px">3.</div>
<div class="t" style="left:1020px;top:228px;font-family:Liberation Mono,monospace;font-size:12px;letter-spacing:-1.2px;line-height:13px">0.</div>
<div class="a" style="left:465px;top:82px;width:1px;height:161px;background:#d2d2d2"></div>
<div class="a" style="left:787px;top:82px;width:1px;height:161px;background:#d2d2d2"></div>
<div class="a" style="left:1015px;top:82px;width:1px;height:161px;background:#d2d2d2"></div>
<div class="a" style="left:436px;top:82px;width:919px;height:1px;background:#fff"></div>
<div class="a" style="left:436px;top:83px;width:919px;height:1px;background:#d8d8d8"></div>
<svg width="1400" height="260" viewBox="0 0 1400 260"><rect x="808" y="93" width="197" height="1" fill="#000"/><line x1="1037" y1="93.5" x2="1347" y2="93.5" stroke="#000" stroke-width="1" stroke-dasharray="3 3" shape-rendering="crispEdges"/><rect x="808" y="113" width="197" height="1" fill="#000"/><line x1="1037" y1="113.5" x2="1347" y2="113.5" stroke="#000" stroke-width="1" stroke-dasharray="3 3" shape-rendering="crispEdges"/><rect x="808" y="133" width="197" height="1" fill="#000"/><line x1="1037" y1="133.5" x2="1347" y2="133.5" stroke="#000" stroke-width="1" stroke-dasharray="3 3" shape-rendering="crispEdges"/><line x1="808.500" y1="153.5" x2="1005.500" y2="153.5" stroke="#000" stroke-width="3" stroke-linecap="round"/><rect x="1037" y="153" width="310" height="1" fill="#808080"/><line x1="808.500" y1="173.5" x2="1005.500" y2="173.5" stroke="#000" stroke-width="3" stroke-linecap="round"/><rect x="1037" y="173" width="310" height="1" fill="#808080"/><line x1="808.500" y1="193.5" x2="1005.500" y2="193.5" stroke="#000" stroke-width="3" stroke-linecap="round"/><rect x="1037" y="193" width="310" height="1" fill="#808080"/><line x1="808.500" y1="213.5" x2="1005.500" y2="213.5" stroke="#000" stroke-width="3" stroke-linecap="round"/><rect x="1037" y="213" width="310" height="1" fill="#808080"/><line x1="808.500" y1="233.5" x2="1005.500" y2="233.5" stroke="#000" stroke-width="3" stroke-linecap="round"/><rect x="1037" y="233" width="310" height="1" fill="#808080"/></svg>
<div class="a" style="left:1129px;top:535px;width:73px;height:19px;border:1px solid #707070;border-radius:3px;background:linear-gradient(#f4f4f4,#ececec 48%,#dedede 52%,#d0d0d0);box-shadow:inset 0 0 0 1px #fafafa"></div>
<div class="t" style="left:1153.5px;top:538px;font-size:12px;line-height:15px">确定</div>
<div class="a" style="left:1210px;top:535px;width:73px;height:19px;border:1px solid #707070;border-radius:3px;background:linear-gradient(#f4f4f4,#ececec 48%,#dedede 52%,#d0d0d0);box-shadow:inset 0 0 0 1px #fafafa"></div>
<div class="t" style="left:1234.5px;top:538px;font-size:12px;line-height:15px">取消</div>
<div class="a" style="left:1291px;top:535px;width:73px;height:19px;border:1px solid #707070;border-radius:3px;background:linear-gradient(#f4f4f4,#ececec 48%,#dedede 52%,#d0d0d0);box-shadow:inset 0 0 0 1px #fafafa"></div>
<div class="t" style="left:1315.5px;top:538px;font-size:12px;line-height:15px">重设</div>
<svg width="1400" height="570" viewBox="0 0 1400 570"><rect x="1370" y="559" width="2" height="2" fill="#b8b8b8"/><rect x="1370" y="556" width="2" height="2" fill="#b8b8b8"/><rect x="1370" y="553" width="2" height="2" fill="#b8b8b8"/><rect x="1367" y="559" width="2" height="2" fill="#b8b8b8"/><rect x="1367" y="556" width="2" height="2" fill="#b8b8b8"/><rect x="1364" y="559" width="2" height="2" fill="#b8b8b8"/></svg>
<div class="a" style="left:1375px;top:396px;width:4px;height:36px;background:radial-gradient(ellipse at center,#2fa81a 0%,#1f6a12 50%,rgba(0,0,0,0) 100%)"></div>
<div class="a" style="left:1000px;top:565px;width:24px;height:4px;background:radial-gradient(ellipse at center,#2a9a18 0%,rgba(0,0,0,0) 100%)"></div>
<div class="a" style="left:1375px;top:59px;width:4px;height:20px;background:radial-gradient(ellipse at center,#3434b8 0%,#1a1a6c 50%,rgba(0,0,0,0) 100%)"></div>
<div class="a" style="left:1375px;top:47px;width:4px;height:12px;background:linear-gradient(#4c5146,rgba(40,40,40,0))"></div>
<div class="a" style="left:411px;top:47px;width:4px;height:12px;background:linear-gradient(#4c5146,rgba(40,40,40,0))"></div>
</body></html>
